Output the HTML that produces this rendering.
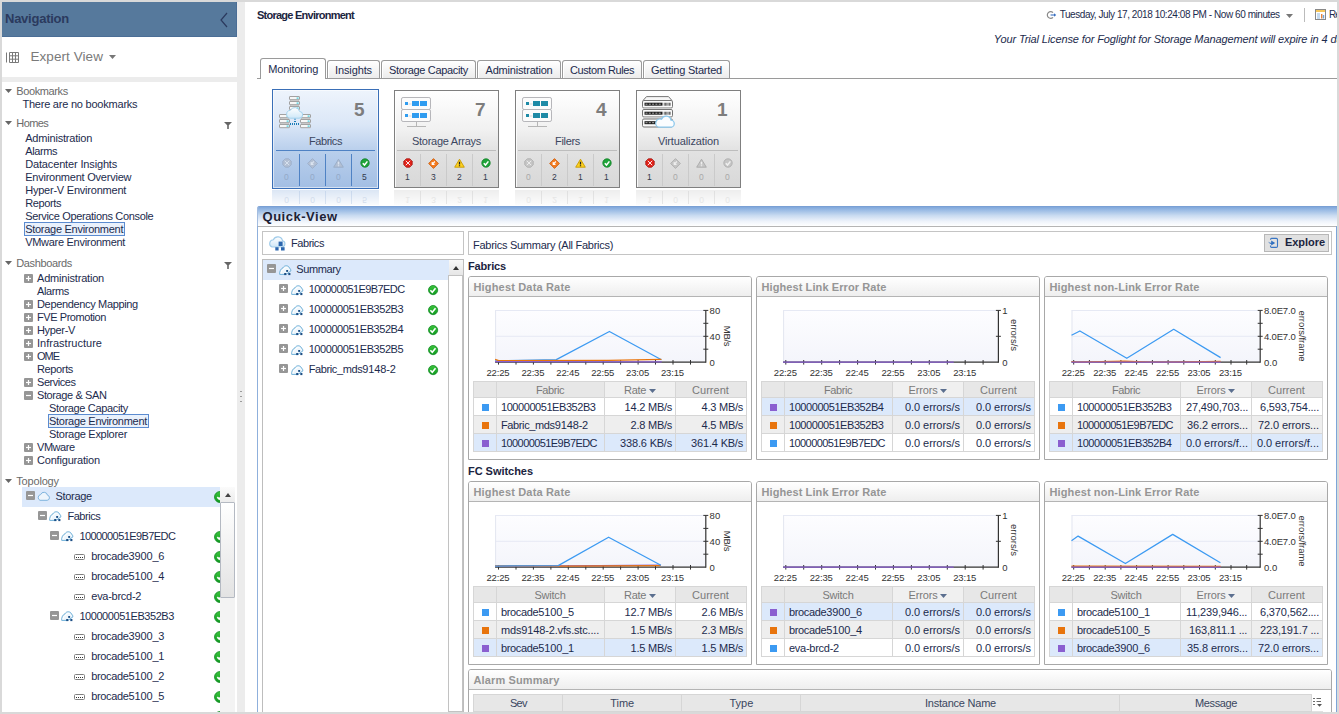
<!DOCTYPE html>
<html><head><meta charset="utf-8"><title>Storage Environment</title>
<style>
*{box-sizing:border-box;margin:0;padding:0}
html,body{width:1339px;height:714px;overflow:hidden;background:#fff}
body{font-family:"Liberation Sans",sans-serif;font-size:11px;color:#1c2b4d;position:relative}
.a{position:absolute}
.t{position:absolute;white-space:pre;line-height:14px;height:14px}
svg{position:absolute;overflow:visible}
</style></head>
<body>
<div class="a" style="left:0px;top:0px;width:1339px;height:714px;background:#d9d9d9"></div>
<div class="a" style="left:2px;top:2px;width:1335px;height:710px;background:#fff"></div>
<!-- navigation panel -->
<div class="a" style="left:2px;top:2px;width:235px;height:35px;background:#56799c;border-right:1px solid #4b6e96;border-bottom:1px solid #4b6e96"></div>
<div class="t" style="left:5.0px;top:12.0px;font-size:13px;letter-spacing:-0.25px;color:#2b3a5e;font-weight:bold;">Navigation</div>
<svg style="left:219px;top:12px;" width="10" height="16" viewBox="0 0 10 16"><path d="M8 1 L2 8 L8 15" fill="none" stroke="#2b3a5e" stroke-width="1.2"/></svg>
<div class="a" style="left:237px;top:2px;width:8px;height:710px;background:#ececec"></div>
<div class="a" style="left:2px;top:77px;width:235px;height:5px;background:#ececec"></div>
<svg style="left:6px;top:51.5px;" width="13" height="11" viewBox="0 0 13 11"><path d="M0.5 0.5v10M3.5 0.5h9v10h-9zM3.5 3.8h9M3.5 7.2h9M6.5 0.5v10M9.5 0.5v10" fill="none" stroke="#7a7a7a" stroke-width="1"/></svg>
<div class="t" style="left:30.5px;top:50.0px;font-size:13.5px;letter-spacing:0.06px;color:#7a7a7a;line-height:18px;height:18px;margin-top:-2px;">Expert View</div>
<svg style="left:109px;top:55px;" width="7" height="4" viewBox="0 0 7 4"><path d="M0 0h7L3.5 4z" fill="#777"/></svg>
<svg style="left:5px;top:89px;" width="7" height="4" viewBox="0 0 7 4"><path d="M0 0h7L3.5 4z" fill="#666"/></svg>
<div class="t" style="left:16.3px;top:84.0px;font-size:11px;letter-spacing:-0.39px;color:#6a6a6a;">Bookmarks</div>
<div class="t" style="left:22.4px;top:97.3px;font-size:11px;letter-spacing:-0.22px;">There are no bookmarks</div>
<svg style="left:5px;top:121px;" width="7" height="4" viewBox="0 0 7 4"><path d="M0 0h7L3.5 4z" fill="#666"/></svg>
<div class="t" style="left:16.3px;top:116.0px;font-size:11px;letter-spacing:-0.57px;color:#6a6a6a;">Homes</div>
<svg style="left:224px;top:122px;" width="8" height="7" viewBox="0 0 8 7"><path d="M0 0h8L4.8 3.2V7H3.2V3.2z" fill="#666"/></svg>
<div class="t" style="left:25.2px;top:131.0px;font-size:11px;letter-spacing:-0.19px;">Administration</div>
<div class="t" style="left:25.2px;top:144.0px;font-size:11px;letter-spacing:-0.37px;">Alarms</div>
<div class="t" style="left:25.2px;top:157.0px;font-size:11px;letter-spacing:-0.15px;">Datacenter Insights</div>
<div class="t" style="left:25.2px;top:170.0px;font-size:11px;letter-spacing:-0.23px;">Environment Overview</div>
<div class="t" style="left:25.2px;top:183.0px;font-size:11px;letter-spacing:-0.22px;">Hyper-V Environment</div>
<div class="t" style="left:25.2px;top:196.0px;font-size:11px;letter-spacing:-0.36px;">Reports</div>
<div class="t" style="left:25.2px;top:209.0px;font-size:11px;letter-spacing:-0.34px;">Service Operations Console</div>
<div class="a" style="left:24px;top:222px;width:101px;height:14px;border:1px solid #5b8bd0;background:#e9f1fc"></div>
<div class="t" style="left:25.2px;top:222.0px;font-size:11px;letter-spacing:-0.28px;">Storage Environment</div>
<div class="t" style="left:25.2px;top:235.0px;font-size:11px;letter-spacing:-0.29px;">VMware Environment</div>
<svg style="left:5px;top:261px;" width="7" height="4" viewBox="0 0 7 4"><path d="M0 0h7L3.5 4z" fill="#666"/></svg>
<div class="t" style="left:16.3px;top:256.0px;font-size:11px;letter-spacing:-0.38px;color:#6a6a6a;">Dashboards</div>
<svg style="left:224px;top:262px;" width="8" height="7" viewBox="0 0 8 7"><path d="M0 0h8L4.8 3.2V7H3.2V3.2z" fill="#666"/></svg>
<svg style="left:24px;top:273.5px;" width="9" height="9" viewBox="0 0 9 9"><rect x="0" y="0" width="9" height="9" rx="1" fill="#969696"/><path d="M2 4.5h5" stroke="#fff" stroke-width="1.2"/><path d="M4.5 2v5" stroke="#fff" stroke-width="1.2"/></svg>
<div class="t" style="left:37.0px;top:271.0px;font-size:11px;letter-spacing:-0.19px;">Administration</div>
<div class="t" style="left:37.0px;top:284.0px;font-size:11px;letter-spacing:-0.37px;">Alarms</div>
<svg style="left:24px;top:299.5px;" width="9" height="9" viewBox="0 0 9 9"><rect x="0" y="0" width="9" height="9" rx="1" fill="#969696"/><path d="M2 4.5h5" stroke="#fff" stroke-width="1.2"/><path d="M4.5 2v5" stroke="#fff" stroke-width="1.2"/></svg>
<div class="t" style="left:37.0px;top:297.0px;font-size:11px;letter-spacing:-0.34px;">Dependency Mapping</div>
<svg style="left:24px;top:312.5px;" width="9" height="9" viewBox="0 0 9 9"><rect x="0" y="0" width="9" height="9" rx="1" fill="#969696"/><path d="M2 4.5h5" stroke="#fff" stroke-width="1.2"/><path d="M4.5 2v5" stroke="#fff" stroke-width="1.2"/></svg>
<div class="t" style="left:37.0px;top:310.0px;font-size:11px;letter-spacing:-0.43px;">FVE Promotion</div>
<svg style="left:24px;top:325.5px;" width="9" height="9" viewBox="0 0 9 9"><rect x="0" y="0" width="9" height="9" rx="1" fill="#969696"/><path d="M2 4.5h5" stroke="#fff" stroke-width="1.2"/><path d="M4.5 2v5" stroke="#fff" stroke-width="1.2"/></svg>
<div class="t" style="left:37.0px;top:323.0px;font-size:11px;letter-spacing:-0.33px;">Hyper-V</div>
<svg style="left:24px;top:338.5px;" width="9" height="9" viewBox="0 0 9 9"><rect x="0" y="0" width="9" height="9" rx="1" fill="#969696"/><path d="M2 4.5h5" stroke="#fff" stroke-width="1.2"/><path d="M4.5 2v5" stroke="#fff" stroke-width="1.2"/></svg>
<div class="t" style="left:37.0px;top:336.0px;font-size:11px;letter-spacing:0.01px;">Infrastructure</div>
<svg style="left:24px;top:351.5px;" width="9" height="9" viewBox="0 0 9 9"><rect x="0" y="0" width="9" height="9" rx="1" fill="#969696"/><path d="M2 4.5h5" stroke="#fff" stroke-width="1.2"/><path d="M4.5 2v5" stroke="#fff" stroke-width="1.2"/></svg>
<div class="t" style="left:37.0px;top:349.0px;font-size:11px;letter-spacing:-1.02px;">OME</div>
<div class="t" style="left:37.0px;top:362.0px;font-size:11px;letter-spacing:-0.36px;">Reports</div>
<svg style="left:24px;top:377.5px;" width="9" height="9" viewBox="0 0 9 9"><rect x="0" y="0" width="9" height="9" rx="1" fill="#969696"/><path d="M2 4.5h5" stroke="#fff" stroke-width="1.2"/><path d="M4.5 2v5" stroke="#fff" stroke-width="1.2"/></svg>
<div class="t" style="left:37.0px;top:375.0px;font-size:11px;letter-spacing:-0.46px;">Services</div>
<svg style="left:24px;top:390.5px;" width="9" height="9" viewBox="0 0 9 9"><rect x="0" y="0" width="9" height="9" rx="1" fill="#969696"/><path d="M2 4.5h5" stroke="#fff" stroke-width="1.2"/></svg>
<div class="t" style="left:37.0px;top:388.0px;font-size:11px;letter-spacing:-0.39px;">Storage &amp; SAN</div>
<div class="t" style="left:49.0px;top:401.0px;font-size:11px;letter-spacing:-0.34px;">Storage Capacity</div>
<div class="a" style="left:48px;top:414px;width:101px;height:14px;border:1px solid #5b8bd0;background:#e9f1fc"></div>
<div class="t" style="left:49.0px;top:414.0px;font-size:11px;letter-spacing:-0.28px;">Storage Environment</div>
<div class="t" style="left:49.0px;top:427.0px;font-size:11px;letter-spacing:-0.28px;">Storage Explorer</div>
<svg style="left:24px;top:442.5px;" width="9" height="9" viewBox="0 0 9 9"><rect x="0" y="0" width="9" height="9" rx="1" fill="#969696"/><path d="M2 4.5h5" stroke="#fff" stroke-width="1.2"/><path d="M4.5 2v5" stroke="#fff" stroke-width="1.2"/></svg>
<div class="t" style="left:37.0px;top:440.0px;font-size:11px;letter-spacing:-0.44px;">VMware</div>
<svg style="left:24px;top:455.5px;" width="9" height="9" viewBox="0 0 9 9"><rect x="0" y="0" width="9" height="9" rx="1" fill="#969696"/><path d="M2 4.5h5" stroke="#fff" stroke-width="1.2"/><path d="M4.5 2v5" stroke="#fff" stroke-width="1.2"/></svg>
<div class="t" style="left:37.0px;top:453.0px;font-size:11px;letter-spacing:-0.19px;">Configuration</div>
<svg style="left:5px;top:479px;" width="7" height="4" viewBox="0 0 7 4"><path d="M0 0h7L3.5 4z" fill="#666"/></svg>
<div class="t" style="left:16.3px;top:474.0px;font-size:11px;letter-spacing:-0.19px;color:#6a6a6a;">Topology</div>
<div class="a" style="left:240px;top:391px;width:2px;height:1px;background:#9c9c9c"></div>
<div class="a" style="left:240px;top:396px;width:2px;height:1px;background:#9c9c9c"></div>
<div class="a" style="left:240px;top:401px;width:2px;height:1px;background:#9c9c9c"></div>
<!-- topology tree -->
<svg width="0" height="0" style="left:0;top:0"><defs><linearGradient id="okg" x1="0" y1="0" x2="0" y2="1"><stop offset="0" stop-color="#3cc43c"/><stop offset="1" stop-color="#0f9a20"/></linearGradient></defs></svg>
<div class="a" style="left:2px;top:486px;width:218px;height:226px;overflow:hidden">
<div class="a" style="left:20px;top:1px;width:198px;height:20px;background:#dce9fb"></div>
<svg style="left:24px;top:5.300000000000011px;" width="9" height="9" viewBox="0 0 9 9"><rect x="0" y="0" width="9" height="9" rx="1" fill="#969696"/><path d="M2 4.5h5" stroke="#fff" stroke-width="1.2"/></svg>
<svg style="left:35px;top:5.300000000000011px;" width="13" height="10" viewBox="0 0 13 10"><path d="M3 9.3h7.2a2.6 2.6 0 0 0 .3-5.1 3.6 3.6 0 0 0-6.9-.6A3 3 0 0 0 3 9.3z" fill="#eef5fc" stroke="#7fb4de" stroke-width="1"/></svg>
<div class="t" style="left:53.4px;top:3.3px;font-size:11px;letter-spacing:-0.29px;">Storage</div>
<svg style="left:211.5px;top:5.300000000000011px;" width="12.0" height="12.0" viewBox="0 0 12.0 12.0"><circle cx="6.0" cy="6.0" r="5.5" fill="url(#okg)" stroke="#128a25" stroke-width="0.8"/><path d="M3.3 6.1l1.9 2 3.2-4" fill="none" stroke="#fff" stroke-width="1.6"/></svg>
<svg style="left:36px;top:25.299999999999955px;" width="9" height="9" viewBox="0 0 9 9"><rect x="0" y="0" width="9" height="9" rx="1" fill="#969696"/><path d="M2 4.5h5" stroke="#fff" stroke-width="1.2"/></svg>
<svg style="left:47px;top:25.299999999999955px;" width="13" height="11" viewBox="0 0 13 11"><path d="M0.7 9.4C0.4 6.4 1.8 3.6 4 2.8 5.2 0.1 9.4 0 10.5 3c.9.6 1.4 1.7 1.4 2.9L7 9.4z" fill="#eef6fc" stroke="#6fb0d8" stroke-width="1"/><path d="M2 8.6C2 6.4 3.2 4.6 5 4 6 2.2 8.6 2 9.6 3.8" fill="none" stroke="#ffffff" stroke-width="1"/><rect x="7.2" y="5" width="1.9" height="1.9" fill="#1d4f86"/><rect x="5.2" y="8" width="2.1" height="2.1" fill="#1d4f86"/><rect x="9.3" y="8" width="2.1" height="2.1" fill="#1d4f86"/></svg>
<div class="t" style="left:65.4px;top:23.3px;font-size:11px;letter-spacing:-0.44px;">Fabrics</div>
<svg style="left:48px;top:45.299999999999955px;" width="9" height="9" viewBox="0 0 9 9"><rect x="0" y="0" width="9" height="9" rx="1" fill="#969696"/><path d="M2 4.5h5" stroke="#fff" stroke-width="1.2"/></svg>
<svg style="left:59px;top:45.299999999999955px;" width="13" height="11" viewBox="0 0 13 11"><path d="M0.7 9.4C0.4 6.4 1.8 3.6 4 2.8 5.2 0.1 9.4 0 10.5 3c.9.6 1.4 1.7 1.4 2.9L7 9.4z" fill="#eef6fc" stroke="#6fb0d8" stroke-width="1"/><path d="M2 8.6C2 6.4 3.2 4.6 5 4 6 2.2 8.6 2 9.6 3.8" fill="none" stroke="#ffffff" stroke-width="1"/><rect x="7.2" y="5" width="1.9" height="1.9" fill="#1d4f86"/><rect x="5.2" y="8" width="2.1" height="2.1" fill="#1d4f86"/><rect x="9.3" y="8" width="2.1" height="2.1" fill="#1d4f86"/></svg>
<div class="t" style="left:77.4px;top:43.3px;font-size:11px;letter-spacing:-0.58px;">100000051E9B7EDC</div>
<svg style="left:211.5px;top:45.299999999999955px;" width="12.0" height="12.0" viewBox="0 0 12.0 12.0"><circle cx="6.0" cy="6.0" r="5.5" fill="url(#okg)" stroke="#128a25" stroke-width="0.8"/><path d="M3.3 6.1l1.9 2 3.2-4" fill="none" stroke="#fff" stroke-width="1.6"/></svg>
<svg style="left:72px;top:68.29999999999995px;" width="11" height="6" viewBox="0 0 11 6"><rect x="0.5" y="0.5" width="10" height="5" rx="1" fill="#fff" stroke="#808080"/><path d="M2 3.5h1M4 3.5h1M6 3.5h1M8 3.5h1" stroke="#333" stroke-width="1"/></svg>
<div class="t" style="left:89.3px;top:63.3px;font-size:11px;letter-spacing:0.00px;"><span style="letter-spacing:-0.37px">brocade</span><span style="letter-spacing:-0.12px">3900</span><span style="letter-spacing:-0.37px">_</span><span style="letter-spacing:-0.12px">6</span></div>
<svg style="left:211.5px;top:65.29999999999995px;" width="12.0" height="12.0" viewBox="0 0 12.0 12.0"><circle cx="6.0" cy="6.0" r="5.5" fill="url(#okg)" stroke="#128a25" stroke-width="0.8"/><path d="M3.3 6.1l1.9 2 3.2-4" fill="none" stroke="#fff" stroke-width="1.6"/></svg>
<svg style="left:72px;top:88.29999999999995px;" width="11" height="6" viewBox="0 0 11 6"><rect x="0.5" y="0.5" width="10" height="5" rx="1" fill="#fff" stroke="#808080"/><path d="M2 3.5h1M4 3.5h1M6 3.5h1M8 3.5h1" stroke="#333" stroke-width="1"/></svg>
<div class="t" style="left:89.3px;top:83.3px;font-size:11px;letter-spacing:0.00px;"><span style="letter-spacing:-0.37px">brocade</span><span style="letter-spacing:-0.12px">5100</span><span style="letter-spacing:-0.37px">_</span><span style="letter-spacing:-0.12px">4</span></div>
<svg style="left:211.5px;top:85.29999999999995px;" width="12.0" height="12.0" viewBox="0 0 12.0 12.0"><circle cx="6.0" cy="6.0" r="5.5" fill="url(#okg)" stroke="#128a25" stroke-width="0.8"/><path d="M3.3 6.1l1.9 2 3.2-4" fill="none" stroke="#fff" stroke-width="1.6"/></svg>
<svg style="left:72px;top:108.29999999999995px;" width="11" height="6" viewBox="0 0 11 6"><rect x="0.5" y="0.5" width="10" height="5" rx="1" fill="#fff" stroke="#808080"/><path d="M2 3.5h1M4 3.5h1M6 3.5h1M8 3.5h1" stroke="#333" stroke-width="1"/></svg>
<div class="t" style="left:89.3px;top:103.3px;font-size:11px;letter-spacing:0.00px;"><span style="letter-spacing:-0.27px">eva-brcd-</span><span style="letter-spacing:-0.12px">2</span></div>
<svg style="left:211.5px;top:105.29999999999995px;" width="12.0" height="12.0" viewBox="0 0 12.0 12.0"><circle cx="6.0" cy="6.0" r="5.5" fill="url(#okg)" stroke="#128a25" stroke-width="0.8"/><path d="M3.3 6.1l1.9 2 3.2-4" fill="none" stroke="#fff" stroke-width="1.6"/></svg>
<svg style="left:48px;top:125.29999999999995px;" width="9" height="9" viewBox="0 0 9 9"><rect x="0" y="0" width="9" height="9" rx="1" fill="#969696"/><path d="M2 4.5h5" stroke="#fff" stroke-width="1.2"/></svg>
<svg style="left:59px;top:125.29999999999995px;" width="13" height="11" viewBox="0 0 13 11"><path d="M0.7 9.4C0.4 6.4 1.8 3.6 4 2.8 5.2 0.1 9.4 0 10.5 3c.9.6 1.4 1.7 1.4 2.9L7 9.4z" fill="#eef6fc" stroke="#6fb0d8" stroke-width="1"/><path d="M2 8.6C2 6.4 3.2 4.6 5 4 6 2.2 8.6 2 9.6 3.8" fill="none" stroke="#ffffff" stroke-width="1"/><rect x="7.2" y="5" width="1.9" height="1.9" fill="#1d4f86"/><rect x="5.2" y="8" width="2.1" height="2.1" fill="#1d4f86"/><rect x="9.3" y="8" width="2.1" height="2.1" fill="#1d4f86"/></svg>
<div class="t" style="left:77.4px;top:123.3px;font-size:11px;letter-spacing:-0.44px;">100000051EB352B3</div>
<svg style="left:211.5px;top:125.29999999999995px;" width="12.0" height="12.0" viewBox="0 0 12.0 12.0"><circle cx="6.0" cy="6.0" r="5.5" fill="url(#okg)" stroke="#128a25" stroke-width="0.8"/><path d="M3.3 6.1l1.9 2 3.2-4" fill="none" stroke="#fff" stroke-width="1.6"/></svg>
<svg style="left:72px;top:148.29999999999995px;" width="11" height="6" viewBox="0 0 11 6"><rect x="0.5" y="0.5" width="10" height="5" rx="1" fill="#fff" stroke="#808080"/><path d="M2 3.5h1M4 3.5h1M6 3.5h1M8 3.5h1" stroke="#333" stroke-width="1"/></svg>
<div class="t" style="left:89.3px;top:143.3px;font-size:11px;letter-spacing:0.00px;"><span style="letter-spacing:-0.37px">brocade</span><span style="letter-spacing:-0.12px">3900</span><span style="letter-spacing:-0.37px">_</span><span style="letter-spacing:-0.12px">3</span></div>
<svg style="left:211.5px;top:145.29999999999995px;" width="12.0" height="12.0" viewBox="0 0 12.0 12.0"><circle cx="6.0" cy="6.0" r="5.5" fill="url(#okg)" stroke="#128a25" stroke-width="0.8"/><path d="M3.3 6.1l1.9 2 3.2-4" fill="none" stroke="#fff" stroke-width="1.6"/></svg>
<svg style="left:72px;top:168.29999999999995px;" width="11" height="6" viewBox="0 0 11 6"><rect x="0.5" y="0.5" width="10" height="5" rx="1" fill="#fff" stroke="#808080"/><path d="M2 3.5h1M4 3.5h1M6 3.5h1M8 3.5h1" stroke="#333" stroke-width="1"/></svg>
<div class="t" style="left:89.3px;top:163.3px;font-size:11px;letter-spacing:0.00px;"><span style="letter-spacing:-0.37px">brocade</span><span style="letter-spacing:-0.12px">5100</span><span style="letter-spacing:-0.37px">_</span><span style="letter-spacing:-0.12px">1</span></div>
<svg style="left:211.5px;top:165.29999999999995px;" width="12.0" height="12.0" viewBox="0 0 12.0 12.0"><circle cx="6.0" cy="6.0" r="5.5" fill="url(#okg)" stroke="#128a25" stroke-width="0.8"/><path d="M3.3 6.1l1.9 2 3.2-4" fill="none" stroke="#fff" stroke-width="1.6"/></svg>
<svg style="left:72px;top:188.29999999999995px;" width="11" height="6" viewBox="0 0 11 6"><rect x="0.5" y="0.5" width="10" height="5" rx="1" fill="#fff" stroke="#808080"/><path d="M2 3.5h1M4 3.5h1M6 3.5h1M8 3.5h1" stroke="#333" stroke-width="1"/></svg>
<div class="t" style="left:89.3px;top:183.3px;font-size:11px;letter-spacing:0.00px;"><span style="letter-spacing:-0.37px">brocade</span><span style="letter-spacing:-0.12px">5100</span><span style="letter-spacing:-0.37px">_</span><span style="letter-spacing:-0.12px">2</span></div>
<svg style="left:211.5px;top:185.29999999999995px;" width="12.0" height="12.0" viewBox="0 0 12.0 12.0"><circle cx="6.0" cy="6.0" r="5.5" fill="url(#okg)" stroke="#128a25" stroke-width="0.8"/><path d="M3.3 6.1l1.9 2 3.2-4" fill="none" stroke="#fff" stroke-width="1.6"/></svg>
<svg style="left:72px;top:208.29999999999995px;" width="11" height="6" viewBox="0 0 11 6"><rect x="0.5" y="0.5" width="10" height="5" rx="1" fill="#fff" stroke="#808080"/><path d="M2 3.5h1M4 3.5h1M6 3.5h1M8 3.5h1" stroke="#333" stroke-width="1"/></svg>
<div class="t" style="left:89.3px;top:203.3px;font-size:11px;letter-spacing:0.00px;"><span style="letter-spacing:-0.37px">brocade</span><span style="letter-spacing:-0.12px">5100</span><span style="letter-spacing:-0.37px">_</span><span style="letter-spacing:-0.12px">5</span></div>
<svg style="left:211.5px;top:205.29999999999995px;" width="12.0" height="12.0" viewBox="0 0 12.0 12.0"><circle cx="6.0" cy="6.0" r="5.5" fill="url(#okg)" stroke="#128a25" stroke-width="0.8"/><path d="M3.3 6.1l1.9 2 3.2-4" fill="none" stroke="#fff" stroke-width="1.6"/></svg>
<svg style="left:72px;top:228.29999999999995px;" width="11" height="6" viewBox="0 0 11 6"><rect x="0.5" y="0.5" width="10" height="5" rx="1" fill="#fff" stroke="#808080"/><path d="M2 3.5h1M4 3.5h1M6 3.5h1M8 3.5h1" stroke="#333" stroke-width="1"/></svg>
<div class="t" style="left:89.3px;top:223.3px;font-size:11px;letter-spacing:0.00px;"><span style="letter-spacing:-0.27px">eva-brcd-</span><span style="letter-spacing:-0.12px">1</span></div>
<svg style="left:211.5px;top:225.29999999999995px;" width="12.0" height="12.0" viewBox="0 0 12.0 12.0"><circle cx="6.0" cy="6.0" r="5.5" fill="url(#okg)" stroke="#128a25" stroke-width="0.8"/><path d="M3.3 6.1l1.9 2 3.2-4" fill="none" stroke="#fff" stroke-width="1.6"/></svg>
</div>
<div class="a" style="left:220px;top:487px;width:15px;height:225px;background:#f3f3f3"></div>
<div class="a" style="left:220px;top:487px;width:15px;height:15px;background:linear-gradient(#fbfbfb,#ececec)"></div>
<svg style="left:224.5px;top:493px;" width="6" height="4" viewBox="0 0 6 4"><path d="M0 4h6L3 0z" fill="#444"/></svg>
<div class="a" style="left:220px;top:502px;width:15px;height:96px;background:linear-gradient(#ffffff,#e3e3e3);border:1px solid #b4b9c2;border-radius:1px"></div>
<!-- page header -->
<div class="t" style="left:257.0px;top:7.5px;font-size:11px;letter-spacing:-0.75px;color:#1b2440;font-weight:bold;">Storage Environment</div>
<svg style="left:1047px;top:10.5px;" width="10" height="8" viewBox="0 0 10 8"><path d="M6 1.7A3.3 3.3 0 1 0 6 6.3" fill="none" stroke="#8a8a8a" stroke-width="1.2"/><path d="M3.6 4h4.6" stroke="#3a6fc0" stroke-width="1.1"/><path d="M7 2.2L9.2 4 7 5.8z" fill="#3a6fc0"/></svg>
<div class="t" style="left:1059.7px;top:7.8px;font-size:10px;letter-spacing:-0.44px;">Tuesday, July 17, 2018 10:24:08 PM - Now 60 minutes</div>
<svg style="left:1286px;top:13.5px;" width="7" height="4" viewBox="0 0 7 4"><path d="M0 0h7L3.5 4z" fill="#777"/></svg>
<div class="a" style="left:1304px;top:8px;width:1px;height:14px;background:#bbb"></div>
<svg style="left:1315px;top:9px;" width="11" height="11" viewBox="0 0 11 11"><rect x="0.5" y="0.5" width="10" height="10" fill="#fff" stroke="#888"/><rect x="1" y="1" width="9" height="2" fill="#f6c65a"/><path d="M2 5h3M2 7h3M2 9h3" stroke="#6fa3d8" stroke-width="0.8"/><rect x="6" y="5" width="1.4" height="4.5" fill="#e8833a"/><rect x="7.8" y="6" width="1.4" height="3.5" fill="#6fa3d8"/></svg>
<div class="t" style="left:1329.0px;top:7.8px;font-size:10px;letter-spacing:-0.90px;">Re</div>
<div class="t" style="left:993.8px;top:31.8px;font-size:11px;letter-spacing:0.00px;font-style:italic;"><span style="letter-spacing:-0.12px">Your Trial License for Foglight for Storage Management will expire in </span><span style="letter-spacing:-0.12px">4</span><span style="letter-spacing:-0.12px"> days</span></div>
<!-- tabs -->
<div class="a" style="left:327px;top:60px;width:53px;height:18px;border:1px solid #9a9a9a;border-bottom:none;border-radius:3px 3px 0 0;background:linear-gradient(#fff,#ececec);box-shadow:inset 1px 1px 0 #fff"></div>
<div class="t" style="left:335.0px;top:62.8px;font-size:11px;letter-spacing:-0.12px;">Insights</div>
<div class="a" style="left:381px;top:60px;width:95px;height:18px;border:1px solid #9a9a9a;border-bottom:none;border-radius:3px 3px 0 0;background:linear-gradient(#fff,#ececec);box-shadow:inset 1px 1px 0 #fff"></div>
<div class="t" style="left:389.0px;top:62.8px;font-size:11px;letter-spacing:-0.34px;">Storage Capacity</div>
<div class="a" style="left:477px;top:60px;width:84px;height:18px;border:1px solid #9a9a9a;border-bottom:none;border-radius:3px 3px 0 0;background:linear-gradient(#fff,#ececec);box-shadow:inset 1px 1px 0 #fff"></div>
<div class="t" style="left:485.5px;top:62.8px;font-size:11px;letter-spacing:-0.19px;">Administration</div>
<div class="a" style="left:562px;top:60px;width:80px;height:18px;border:1px solid #9a9a9a;border-bottom:none;border-radius:3px 3px 0 0;background:linear-gradient(#fff,#ececec);box-shadow:inset 1px 1px 0 #fff"></div>
<div class="t" style="left:570.0px;top:62.8px;font-size:11px;letter-spacing:-0.42px;">Custom Rules</div>
<div class="a" style="left:643px;top:60px;width:87px;height:18px;border:1px solid #9a9a9a;border-bottom:none;border-radius:3px 3px 0 0;background:linear-gradient(#fff,#ececec);box-shadow:inset 1px 1px 0 #fff"></div>
<div class="t" style="left:651.0px;top:62.8px;font-size:11px;letter-spacing:-0.20px;">Getting Started</div>
<div class="a" style="left:257px;top:78px;width:1080px;height:1px;background:#9a9a9a"></div>
<div class="a" style="left:260px;top:58px;width:66px;height:21px;border:1px solid #9a9a9a;border-bottom:none;border-radius:3px 3px 0 0;background:#fff"></div>
<div class="t" style="left:268.2px;top:61.8px;font-size:11px;letter-spacing:-0.14px;">Monitoring</div>
<!-- tiles -->
<div class="a" style="left:272px;top:89px;width:107px;height:100px;border:1px solid #3a6fb7;background:linear-gradient(#eef4fc 0%,#dbe7f7 35%,#b9cfec 62%,#a3bfe4 100%);box-shadow:inset 0 0 0 1px rgba(255,255,255,.55)"></div>
<div class="t" style="left:309.0px;top:134.0px;font-size:11px;letter-spacing:-0.44px;color:#3b4660;">Fabrics</div>
<div class="t" style="left:354.0px;top:103.0px;font-size:19px;letter-spacing:0.00px;color:#7d7d7d;font-weight:bold;line-height:22px;height:22px;margin-top:-4px;">5</div>
<div class="a" style="left:276px;top:150px;width:99px;height:1px;background:#4f82c4"></div>
<div class="a" style="left:299px;top:154px;width:1px;height:32px;background:#4f82c4"></div>
<div class="a" style="left:325px;top:154px;width:1px;height:32px;background:#4f82c4"></div>
<div class="a" style="left:351px;top:154px;width:1px;height:32px;background:#4f82c4"></div>
<svg style="left:281.5px;top:158.4px;" width="10" height="10" viewBox="0 0 10 10"><path d="M3.3 0.8h3.4L9.2 3.3v3.4L6.7 9.2H3.3L0.8 6.7V3.3z" fill="#b3c0d4" stroke="#98abc6" stroke-width="0.8"/><path d="M2.8 2.8l4.4 4.4M7.2 2.8l-4.4 4.4" stroke="#dbe4f0" stroke-width="0.9"/></svg>
<div class="t" style="left:284.1px;top:170.1px;font-size:8.5px;letter-spacing:0.00px;color:#94a9c8;">0</div>
<svg style="left:307.0px;top:157.9px;" width="11" height="11" viewBox="0 0 11 11"><path d="M5.5 0.6L10.4 5.5 5.5 10.4 0.6 5.5z" fill="#b3c0d4" stroke="#98abc6" stroke-width="0.8"/><path d="M6.9 3.5L4.3 6.1M4.2 4.1v2.3h2.3" fill="none" stroke="#dbe4f0" stroke-width="1.1"/></svg>
<div class="t" style="left:310.1px;top:170.1px;font-size:8.5px;letter-spacing:0.00px;color:#94a9c8;">0</div>
<svg style="left:333.0px;top:158.4px;" width="11" height="10" viewBox="0 0 11 10"><path d="M5.5 1.2L10.3 9.2H0.7z" fill="#b3c0d4" stroke="#98abc6" stroke-width="0.9" stroke-linejoin="round"/><path d="M5.5 3.8v2.6M5.5 7.2v1.1" stroke="#dbe4f0" stroke-width="1.3"/></svg>
<div class="t" style="left:336.1px;top:170.1px;font-size:8.5px;letter-spacing:0.00px;color:#94a9c8;">0</div>
<svg style="left:359.5px;top:158.4px;" width="10" height="10" viewBox="0 0 10 10"><circle cx="5" cy="5" r="4.2" fill="#1fa53a" stroke="#0c7d22" stroke-width="0.8"/><path d="M2.8 5.2l1.7 1.8 2.9-3.6" fill="none" stroke="#fff" stroke-width="1.5"/></svg>
<div class="t" style="left:362.1px;top:170.1px;font-size:8.5px;letter-spacing:0.00px;color:#333a4d;">5</div>
<div class="a" style="left:272px;top:190px;width:107px;height:15px;background:linear-gradient(rgba(255,255,255,.58),rgba(255,255,255,.93)),#a9c3e6"></div>
<div class="a" style="left:299px;top:191px;width:1px;height:13px;background:rgba(160,185,220,.35)"></div>
<div class="a" style="left:325px;top:191px;width:1px;height:13px;background:rgba(160,185,220,.35)"></div>
<div class="a" style="left:351px;top:191px;width:1px;height:13px;background:rgba(160,185,220,.35)"></div>
<div class="t" style="left:283.5px;top:193px;font-size:8.5px;color:#d3ddec;transform:scaleY(-1);width:6px;text-align:center">0</div>
<div class="t" style="left:309.5px;top:193px;font-size:8.5px;color:#d3ddec;transform:scaleY(-1);width:6px;text-align:center">0</div>
<div class="t" style="left:335.5px;top:193px;font-size:8.5px;color:#d3ddec;transform:scaleY(-1);width:6px;text-align:center">0</div>
<div class="t" style="left:361.5px;top:193px;font-size:8.5px;color:#d3ddec;transform:scaleY(-1);width:6px;text-align:center">5</div>
<div class="a" style="left:394px;top:90px;width:105px;height:98px;border:1px solid #7f7f7f;background:linear-gradient(#ffffff 0%,#f1f1f1 40%,#e2e2e2 62%,#d8d8d8 100%);box-shadow:inset 1px 1px 0 rgba(255,255,255,.8)"></div>
<div class="t" style="left:412.0px;top:134.0px;font-size:11px;letter-spacing:-0.27px;color:#3b4660;">Storage Arrays</div>
<div class="t" style="left:475.0px;top:103.0px;font-size:19px;letter-spacing:0.00px;color:#7d7d7d;font-weight:bold;line-height:22px;height:22px;margin-top:-4px;">7</div>
<div class="a" style="left:397px;top:150px;width:99px;height:1px;background:#bdbdbd"></div>
<div class="a" style="left:420px;top:154px;width:1px;height:32px;background:#cacaca"></div>
<div class="a" style="left:446px;top:154px;width:1px;height:32px;background:#cacaca"></div>
<div class="a" style="left:472px;top:154px;width:1px;height:32px;background:#cacaca"></div>
<svg style="left:402.5px;top:158.4px;" width="10" height="10" viewBox="0 0 10 10"><path d="M3.3 0.8h3.4L9.2 3.3v3.4L6.7 9.2H3.3L0.8 6.7V3.3z" fill="#e2231a" stroke="#a01510" stroke-width="0.8"/><path d="M2.8 2.8l4.4 4.4M7.2 2.8l-4.4 4.4" stroke="#fff" stroke-width="0.9"/></svg>
<div class="t" style="left:405.1px;top:170.1px;font-size:8.5px;letter-spacing:0.00px;color:#333a4d;">1</div>
<svg style="left:428.0px;top:157.9px;" width="11" height="11" viewBox="0 0 11 11"><path d="M5.5 0.6L10.4 5.5 5.5 10.4 0.6 5.5z" fill="#f47b20" stroke="#c85a0a" stroke-width="0.8"/><path d="M6.9 3.5L4.3 6.1M4.2 4.1v2.3h2.3" fill="none" stroke="#fff" stroke-width="1.1"/></svg>
<div class="t" style="left:431.1px;top:170.1px;font-size:8.5px;letter-spacing:0.00px;color:#333a4d;">3</div>
<svg style="left:454.0px;top:158.4px;" width="11" height="10" viewBox="0 0 11 10"><path d="M5.5 1.2L10.3 9.2H0.7z" fill="#ffd21f" stroke="#c79a00" stroke-width="0.9" stroke-linejoin="round"/><path d="M5.5 3.8v2.6M5.5 7.2v1.1" stroke="#222" stroke-width="1.3"/></svg>
<div class="t" style="left:457.1px;top:170.1px;font-size:8.5px;letter-spacing:0.00px;color:#333a4d;">2</div>
<svg style="left:480.5px;top:158.4px;" width="10" height="10" viewBox="0 0 10 10"><circle cx="5" cy="5" r="4.2" fill="#1fa53a" stroke="#0c7d22" stroke-width="0.8"/><path d="M2.8 5.2l1.7 1.8 2.9-3.6" fill="none" stroke="#fff" stroke-width="1.5"/></svg>
<div class="t" style="left:483.1px;top:170.1px;font-size:8.5px;letter-spacing:0.00px;color:#333a4d;">1</div>
<div class="a" style="left:394px;top:190px;width:105px;height:15px;background:linear-gradient(rgba(255,255,255,.58),rgba(255,255,255,.93)),#d6d6d6"></div>
<div class="a" style="left:420px;top:191px;width:1px;height:13px;background:rgba(200,200,200,.4)"></div>
<div class="a" style="left:446px;top:191px;width:1px;height:13px;background:rgba(200,200,200,.4)"></div>
<div class="a" style="left:472px;top:191px;width:1px;height:13px;background:rgba(200,200,200,.4)"></div>
<div class="t" style="left:404.5px;top:193px;font-size:8.5px;color:#e6e6e6;transform:scaleY(-1);width:6px;text-align:center">1</div>
<div class="t" style="left:430.5px;top:193px;font-size:8.5px;color:#e6e6e6;transform:scaleY(-1);width:6px;text-align:center">3</div>
<div class="t" style="left:456.5px;top:193px;font-size:8.5px;color:#e6e6e6;transform:scaleY(-1);width:6px;text-align:center">2</div>
<div class="t" style="left:482.5px;top:193px;font-size:8.5px;color:#e6e6e6;transform:scaleY(-1);width:6px;text-align:center">1</div>
<div class="a" style="left:515px;top:90px;width:105px;height:98px;border:1px solid #7f7f7f;background:linear-gradient(#ffffff 0%,#f1f1f1 40%,#e2e2e2 62%,#d8d8d8 100%);box-shadow:inset 1px 1px 0 rgba(255,255,255,.8)"></div>
<div class="t" style="left:555.0px;top:134.0px;font-size:11px;letter-spacing:-0.32px;color:#3b4660;">Filers</div>
<div class="t" style="left:596.0px;top:103.0px;font-size:19px;letter-spacing:0.00px;color:#7d7d7d;font-weight:bold;line-height:22px;height:22px;margin-top:-4px;">4</div>
<div class="a" style="left:518px;top:150px;width:99px;height:1px;background:#bdbdbd"></div>
<div class="a" style="left:541px;top:154px;width:1px;height:32px;background:#cacaca"></div>
<div class="a" style="left:567px;top:154px;width:1px;height:32px;background:#cacaca"></div>
<div class="a" style="left:593px;top:154px;width:1px;height:32px;background:#cacaca"></div>
<svg style="left:523.5px;top:158.4px;" width="10" height="10" viewBox="0 0 10 10"><path d="M3.3 0.8h3.4L9.2 3.3v3.4L6.7 9.2H3.3L0.8 6.7V3.3z" fill="#c6c6c6" stroke="#a9a9a9" stroke-width="0.8"/><path d="M2.8 2.8l4.4 4.4M7.2 2.8l-4.4 4.4" stroke="#efefef" stroke-width="0.9"/></svg>
<div class="t" style="left:526.1px;top:170.1px;font-size:8.5px;letter-spacing:0.00px;color:#a9a9a9;">0</div>
<svg style="left:549.0px;top:157.9px;" width="11" height="11" viewBox="0 0 11 11"><path d="M5.5 0.6L10.4 5.5 5.5 10.4 0.6 5.5z" fill="#f47b20" stroke="#c85a0a" stroke-width="0.8"/><path d="M6.9 3.5L4.3 6.1M4.2 4.1v2.3h2.3" fill="none" stroke="#fff" stroke-width="1.1"/></svg>
<div class="t" style="left:552.1px;top:170.1px;font-size:8.5px;letter-spacing:0.00px;color:#333a4d;">2</div>
<svg style="left:575.0px;top:158.4px;" width="11" height="10" viewBox="0 0 11 10"><path d="M5.5 1.2L10.3 9.2H0.7z" fill="#ffd21f" stroke="#c79a00" stroke-width="0.9" stroke-linejoin="round"/><path d="M5.5 3.8v2.6M5.5 7.2v1.1" stroke="#222" stroke-width="1.3"/></svg>
<div class="t" style="left:578.1px;top:170.1px;font-size:8.5px;letter-spacing:0.00px;color:#333a4d;">1</div>
<svg style="left:601.5px;top:158.4px;" width="10" height="10" viewBox="0 0 10 10"><circle cx="5" cy="5" r="4.2" fill="#1fa53a" stroke="#0c7d22" stroke-width="0.8"/><path d="M2.8 5.2l1.7 1.8 2.9-3.6" fill="none" stroke="#fff" stroke-width="1.5"/></svg>
<div class="t" style="left:604.1px;top:170.1px;font-size:8.5px;letter-spacing:0.00px;color:#333a4d;">1</div>
<div class="a" style="left:515px;top:190px;width:105px;height:15px;background:linear-gradient(rgba(255,255,255,.58),rgba(255,255,255,.93)),#d6d6d6"></div>
<div class="a" style="left:541px;top:191px;width:1px;height:13px;background:rgba(200,200,200,.4)"></div>
<div class="a" style="left:567px;top:191px;width:1px;height:13px;background:rgba(200,200,200,.4)"></div>
<div class="a" style="left:593px;top:191px;width:1px;height:13px;background:rgba(200,200,200,.4)"></div>
<div class="t" style="left:525.5px;top:193px;font-size:8.5px;color:#e6e6e6;transform:scaleY(-1);width:6px;text-align:center">0</div>
<div class="t" style="left:551.5px;top:193px;font-size:8.5px;color:#e6e6e6;transform:scaleY(-1);width:6px;text-align:center">2</div>
<div class="t" style="left:577.5px;top:193px;font-size:8.5px;color:#e6e6e6;transform:scaleY(-1);width:6px;text-align:center">1</div>
<div class="t" style="left:603.5px;top:193px;font-size:8.5px;color:#e6e6e6;transform:scaleY(-1);width:6px;text-align:center">1</div>
<div class="a" style="left:636px;top:90px;width:105px;height:98px;border:1px solid #7f7f7f;background:linear-gradient(#ffffff 0%,#f1f1f1 40%,#e2e2e2 62%,#d8d8d8 100%);box-shadow:inset 1px 1px 0 rgba(255,255,255,.8)"></div>
<div class="t" style="left:658.0px;top:134.0px;font-size:11px;letter-spacing:-0.13px;color:#3b4660;">Virtualization</div>
<div class="t" style="left:717.0px;top:103.0px;font-size:19px;letter-spacing:0.00px;color:#7d7d7d;font-weight:bold;line-height:22px;height:22px;margin-top:-4px;">1</div>
<div class="a" style="left:639px;top:150px;width:99px;height:1px;background:#bdbdbd"></div>
<div class="a" style="left:662px;top:154px;width:1px;height:32px;background:#cacaca"></div>
<div class="a" style="left:688px;top:154px;width:1px;height:32px;background:#cacaca"></div>
<div class="a" style="left:714px;top:154px;width:1px;height:32px;background:#cacaca"></div>
<svg style="left:644.5px;top:158.4px;" width="10" height="10" viewBox="0 0 10 10"><path d="M3.3 0.8h3.4L9.2 3.3v3.4L6.7 9.2H3.3L0.8 6.7V3.3z" fill="#e2231a" stroke="#a01510" stroke-width="0.8"/><path d="M2.8 2.8l4.4 4.4M7.2 2.8l-4.4 4.4" stroke="#fff" stroke-width="0.9"/></svg>
<div class="t" style="left:647.1px;top:170.1px;font-size:8.5px;letter-spacing:0.00px;color:#333a4d;">1</div>
<svg style="left:670.0px;top:157.9px;" width="11" height="11" viewBox="0 0 11 11"><path d="M5.5 0.6L10.4 5.5 5.5 10.4 0.6 5.5z" fill="#c6c6c6" stroke="#a9a9a9" stroke-width="0.8"/><path d="M6.9 3.5L4.3 6.1M4.2 4.1v2.3h2.3" fill="none" stroke="#efefef" stroke-width="1.1"/></svg>
<div class="t" style="left:673.1px;top:170.1px;font-size:8.5px;letter-spacing:0.00px;color:#a9a9a9;">0</div>
<svg style="left:696.0px;top:158.4px;" width="11" height="10" viewBox="0 0 11 10"><path d="M5.5 1.2L10.3 9.2H0.7z" fill="#c6c6c6" stroke="#a9a9a9" stroke-width="0.9" stroke-linejoin="round"/><path d="M5.5 3.8v2.6M5.5 7.2v1.1" stroke="#efefef" stroke-width="1.3"/></svg>
<div class="t" style="left:699.1px;top:170.1px;font-size:8.5px;letter-spacing:0.00px;color:#a9a9a9;">0</div>
<svg style="left:722.5px;top:158.4px;" width="10" height="10" viewBox="0 0 10 10"><circle cx="5" cy="5" r="4.2" fill="#c6c6c6" stroke="#a9a9a9" stroke-width="0.8"/><path d="M2.8 5.2l1.7 1.8 2.9-3.6" fill="none" stroke="#efefef" stroke-width="1.5"/></svg>
<div class="t" style="left:725.1px;top:170.1px;font-size:8.5px;letter-spacing:0.00px;color:#a9a9a9;">0</div>
<div class="a" style="left:636px;top:190px;width:105px;height:15px;background:linear-gradient(rgba(255,255,255,.58),rgba(255,255,255,.93)),#d6d6d6"></div>
<div class="a" style="left:662px;top:191px;width:1px;height:13px;background:rgba(200,200,200,.4)"></div>
<div class="a" style="left:688px;top:191px;width:1px;height:13px;background:rgba(200,200,200,.4)"></div>
<div class="a" style="left:714px;top:191px;width:1px;height:13px;background:rgba(200,200,200,.4)"></div>
<div class="t" style="left:646.5px;top:193px;font-size:8.5px;color:#e6e6e6;transform:scaleY(-1);width:6px;text-align:center">1</div>
<div class="t" style="left:672.5px;top:193px;font-size:8.5px;color:#e6e6e6;transform:scaleY(-1);width:6px;text-align:center">0</div>
<div class="t" style="left:698.5px;top:193px;font-size:8.5px;color:#e6e6e6;transform:scaleY(-1);width:6px;text-align:center">0</div>
<div class="t" style="left:724.5px;top:193px;font-size:8.5px;color:#e6e6e6;transform:scaleY(-1);width:6px;text-align:center">0</div>
<svg style="left:401px;top:97px;" width="30" height="31" viewBox="0 0 30 31"><rect x="0.5" y="0.5" width="29" height="12" rx="1.6" fill="#fbfbfb" stroke="#b6b6ba"/><rect x="4" y="5.0" width="3" height="3" fill="#2f9cf0"/><rect x="7.5" y="6.0" width="3" height="2" fill="#e9e9e9"/><rect x="11" y="4.0" width="7" height="5" fill="#2f9cf0"/><rect x="19" y="4.0" width="7" height="5" fill="#2f9cf0"/><rect x="0.5" y="12.5" width="29" height="12" rx="1.6" fill="#fbfbfb" stroke="#b6b6ba"/><rect x="4" y="17.0" width="3" height="3" fill="#2f9cf0"/><rect x="7.5" y="18.0" width="3" height="2" fill="#e9e9e9"/><rect x="11" y="16.0" width="7" height="5" fill="#2f9cf0"/><rect x="19" y="16.0" width="7" height="5" fill="#2f9cf0"/><path d="M15.5 25v4.5M6 29.5h19" stroke="#b6b6b6" stroke-width="1" fill="none"/></svg>
<svg style="left:522px;top:97px;" width="30" height="31" viewBox="0 0 30 31"><rect x="0.5" y="0.5" width="29" height="12" rx="1.6" fill="#fbfbfb" stroke="#b6b6ba"/><rect x="4" y="5.0" width="3" height="3" fill="#1e8aa6"/><rect x="7.5" y="6.0" width="3" height="2" fill="#e9e9e9"/><rect x="11" y="4.0" width="7" height="5" fill="#1e8aa6"/><rect x="19" y="4.0" width="7" height="5" fill="#1e8aa6"/><rect x="0.5" y="12.5" width="29" height="12" rx="1.6" fill="#fbfbfb" stroke="#b6b6ba"/><rect x="4" y="17.0" width="3" height="3" fill="#1e8aa6"/><rect x="7.5" y="18.0" width="3" height="2" fill="#e9e9e9"/><rect x="11" y="16.0" width="7" height="5" fill="#1e8aa6"/><rect x="19" y="16.0" width="7" height="5" fill="#1e8aa6"/><path d="M15.5 25v4.5M6 29.5h19" stroke="#b6b6b6" stroke-width="1" fill="none"/></svg>
<svg style="left:279px;top:96px;" width="33" height="33" viewBox="0 0 33 33"><rect x="11.5" y="4" width="8" height="1.5" fill="#dcdcdc" stroke="#b0b0b0" stroke-width="0.5"/><rect x="10.5" y="0.5" width="10" height="3.2" rx="0.4" fill="#f7f7f7" stroke="#a2a2a2" stroke-width="1"/><rect x="17.6" y="1.6" width="2" height="1" fill="#1fc4d8"/><rect x="11.5" y="9" width="8" height="1.5" fill="#dcdcdc" stroke="#b0b0b0" stroke-width="0.5"/><rect x="10.5" y="5.5" width="10" height="3.2" rx="0.4" fill="#f7f7f7" stroke="#a2a2a2" stroke-width="1"/><rect x="17.6" y="6.6" width="2" height="1" fill="#1fc4d8"/><rect x="10.5" y="10.5" width="10" height="3.2" rx="0.4" fill="#f7f7f7" stroke="#a2a2a2" stroke-width="1"/><rect x="17.6" y="11.6" width="2" height="1" fill="#1fc4d8"/><rect x="1.5" y="22" width="8" height="1.5" fill="#dcdcdc" stroke="#b0b0b0" stroke-width="0.5"/><rect x="0.5" y="18.5" width="10" height="3.2" rx="0.4" fill="#f7f7f7" stroke="#a2a2a2" stroke-width="1"/><rect x="7.6" y="19.6" width="2" height="1" fill="#1fc4d8"/><rect x="1.5" y="27" width="8" height="1.5" fill="#dcdcdc" stroke="#b0b0b0" stroke-width="0.5"/><rect x="0.5" y="23.5" width="10" height="3.2" rx="0.4" fill="#f7f7f7" stroke="#a2a2a2" stroke-width="1"/><rect x="7.6" y="24.6" width="2" height="1" fill="#1fc4d8"/><rect x="0.5" y="28.5" width="10" height="3.2" rx="0.4" fill="#f7f7f7" stroke="#a2a2a2" stroke-width="1"/><rect x="7.6" y="29.6" width="2" height="1" fill="#1fc4d8"/><rect x="22.5" y="22" width="8" height="1.5" fill="#dcdcdc" stroke="#b0b0b0" stroke-width="0.5"/><rect x="21.5" y="18.5" width="10" height="3.2" rx="0.4" fill="#f7f7f7" stroke="#a2a2a2" stroke-width="1"/><rect x="28.6" y="19.6" width="2" height="1" fill="#1fc4d8"/><rect x="22.5" y="27" width="8" height="1.5" fill="#dcdcdc" stroke="#b0b0b0" stroke-width="0.5"/><rect x="21.5" y="23.5" width="10" height="3.2" rx="0.4" fill="#f7f7f7" stroke="#a2a2a2" stroke-width="1"/><rect x="28.6" y="24.6" width="2" height="1" fill="#1fc4d8"/><rect x="21.5" y="28.5" width="10" height="3.2" rx="0.4" fill="#f7f7f7" stroke="#a2a2a2" stroke-width="1"/><rect x="28.6" y="29.6" width="2" height="1" fill="#1fc4d8"/><path d="M11 28h10" stroke="#1c7db8" stroke-width="2" stroke-dasharray="1 1"/><path d="M16 22.6v5" stroke="#1c7db8" stroke-width="2" stroke-dasharray="1 1.4"/><defs><linearGradient id="cg2" x1="0" y1="0" x2="0" y2="1"><stop offset="0" stop-color="#ffffff"/><stop offset="1" stop-color="#cfe8f8"/></linearGradient></defs><path d="M11.8 22.2H20a3.4 3.4 0 0 0 .5-6.8 4.9 4.9 0 0 0-9.2-1 3.9 3.9 0 0 0 .5 7.8z" fill="url(#cg2)" stroke="#a4d3ee" stroke-width="1"/></svg>
<svg style="left:642px;top:96px;" width="34" height="33" viewBox="0 0 34 33"><path d="M1 4.5L4.5 0.6h22L30 4.5" fill="#f6f6f6" stroke="#757575" stroke-width="1"/><rect x="0.5" y="4.5" width="30" height="7.5" rx="1.4" fill="#fafafa" stroke="#737373" stroke-width="1"/><rect x="2.5" y="6.7" width="18" height="3" fill="#1f1f1f"/><path d="M3.5 8.2h16" stroke="#bdbdbd" stroke-width="0.9" stroke-dasharray="2 1.3"/><path d="M21.8 8.2h7" stroke="#4a4a4a" stroke-width="3" stroke-dasharray="0.8 0.5"/><rect x="1.5" y="12.4" width="28" height="1" fill="#d9d9d9"/><rect x="0.5" y="13.5" width="30" height="7.5" rx="1.4" fill="#fafafa" stroke="#737373" stroke-width="1"/><rect x="2.5" y="15.7" width="18" height="3" fill="#1f1f1f"/><path d="M3.5 17.2h16" stroke="#bdbdbd" stroke-width="0.9" stroke-dasharray="2 1.3"/><path d="M21.8 17.2h7" stroke="#4a4a4a" stroke-width="3" stroke-dasharray="0.8 0.5"/><rect x="1.5" y="21.4" width="28" height="1" fill="#d9d9d9"/><rect x="0.5" y="23" width="30" height="8" rx="1.4" fill="#fafafa" stroke="#737373" stroke-width="1"/><rect x="2.5" y="25.2" width="18" height="3" fill="#1f1f1f"/><path d="M3.5 26.7h16" stroke="#bdbdbd" stroke-width="0.9" stroke-dasharray="2 1.3"/><path d="M21.8 26.7h7" stroke="#4a4a4a" stroke-width="3" stroke-dasharray="0.8 0.5"/><path d="M16.5 31.2h12a3.5 3.5 0 0 0 .5-7 5 5 0 0 0-9.5-1 4.1 4.1 0 0 0-3 8z" fill="#fbfdff" stroke="#8cc8ec" stroke-width="1.3"/></svg>
<!-- quick view -->
<div class="a" style="left:257px;top:206px;width:1080px;height:506px;border-left:1px solid #8fb0dc;border-right:1px solid #7da5d9;background:#fff;border-radius:3px 0 0 0"></div>
<div class="a" style="left:257px;top:206px;width:1080px;height:20px;background:linear-gradient(#7fa7db 0%,#9dbde5 18%,#c9dbf1 45%,#eef3fb 75%,#ffffff 100%);border-top:1px solid #7aa0d4;border-left:1px solid #a4bde0;border-radius:3px 0 0 0"></div>
<div class="a" style="left:258px;top:226px;width:1078px;height:1px;background:#b5b5b5"></div>
<div class="t" style="left:262.5px;top:209.5px;font-size:13px;letter-spacing:0.52px;color:#1d2236;font-weight:bold;line-height:16px;height:16px;margin-top:-1px;">Quick-View</div>
<div class="a" style="left:262px;top:231px;width:202px;height:24px;border:1px solid #c4c4c4;background:#fff"></div>
<svg style="left:268px;top:235px;" width="17" height="16" viewBox="0 0 17 16"><defs><linearGradient id="cg" x1="0" y1="0" x2="0" y2="1"><stop offset="0" stop-color="#ffffff"/><stop offset="1" stop-color="#cfe6f7"/></linearGradient></defs><path d="M4 12h10a3.2 3.2 0 0 0 .5-6.3 4.8 4.8 0 0 0-9.1-1A3.8 3.8 0 0 0 4 12z" fill="url(#cg)" stroke="#9fcbea" stroke-width="1.1"/><rect x="10.6" y="6.6" width="4" height="4.4" fill="#2b66ae"/><rect x="7.3" y="12.2" width="3.3" height="3.3" fill="#2b66ae"/><rect x="13" y="12.2" width="3.6" height="3.3" fill="#2b66ae"/></svg>
<div class="t" style="left:291.0px;top:236.0px;font-size:11px;letter-spacing:-0.44px;">Fabrics</div>
<div class="a" style="left:262px;top:259px;width:202px;height:455px;border:1px solid #bdbdbd;border-bottom:none;background:#fff"></div>
<div class="a" style="left:263px;top:260px;width:186px;height:20px;background:#dce9fb"></div>
<div class="a" style="left:449px;top:260px;width:14px;height:452px;background:#f3f3f3;border-left:1px solid #dcdcdc"></div>
<div class="a" style="left:449px;top:260px;width:14px;height:15px;background:linear-gradient(#f8f8f8,#e6e6e6)"></div>
<svg style="left:453px;top:266px;" width="6" height="4" viewBox="0 0 6 4"><path d="M0 4h6L3 0z" fill="#333"/></svg>
<div class="a" style="left:448px;top:275px;width:15px;height:437px;background:#fff;border:1px solid #c2c2c2"></div>
<svg style="left:267px;top:264.0px;" width="9" height="9" viewBox="0 0 9 9"><rect x="0" y="0" width="9" height="9" rx="1" fill="#969696"/><path d="M2 4.5h5" stroke="#fff" stroke-width="1.2"/></svg>
<svg style="left:278.5px;top:264.5px;" width="13" height="11" viewBox="0 0 13 11"><path d="M0.7 9.4C0.4 6.4 1.8 3.6 4 2.8 5.2 0.1 9.4 0 10.5 3c.9.6 1.4 1.7 1.4 2.9L7 9.4z" fill="#eef6fc" stroke="#6fb0d8" stroke-width="1"/><path d="M2 8.6C2 6.4 3.2 4.6 5 4 6 2.2 8.6 2 9.6 3.8" fill="none" stroke="#ffffff" stroke-width="1"/><rect x="7.2" y="5" width="1.9" height="1.9" fill="#1d4f86"/><rect x="5.2" y="8" width="2.1" height="2.1" fill="#1d4f86"/><rect x="9.3" y="8" width="2.1" height="2.1" fill="#1d4f86"/></svg>
<div class="t" style="left:296.2px;top:262.2px;font-size:11px;letter-spacing:-0.37px;">Summary</div>
<svg style="left:279.2px;top:284.4px;" width="9" height="9" viewBox="0 0 9 9"><rect x="0" y="0" width="9" height="9" rx="1" fill="#969696"/><path d="M2 4.5h5" stroke="#fff" stroke-width="1.2"/><path d="M4.5 2v5" stroke="#fff" stroke-width="1.2"/></svg>
<svg style="left:290.7px;top:284.5px;" width="13" height="11" viewBox="0 0 13 11"><path d="M0.7 9.4C0.4 6.4 1.8 3.6 4 2.8 5.2 0.1 9.4 0 10.5 3c.9.6 1.4 1.7 1.4 2.9L7 9.4z" fill="#eef6fc" stroke="#6fb0d8" stroke-width="1"/><path d="M2 8.6C2 6.4 3.2 4.6 5 4 6 2.2 8.6 2 9.6 3.8" fill="none" stroke="#ffffff" stroke-width="1"/><rect x="7.2" y="5" width="1.9" height="1.9" fill="#1d4f86"/><rect x="5.2" y="8" width="2.1" height="2.1" fill="#1d4f86"/><rect x="9.3" y="8" width="2.1" height="2.1" fill="#1d4f86"/></svg>
<div class="t" style="left:308.7px;top:282.2px;font-size:11px;letter-spacing:-0.58px;">100000051E9B7EDC</div>
<svg style="left:428.2px;top:285.4px;" width="10.2" height="10.2" viewBox="0 0 10.2 10.2"><circle cx="5.1" cy="5.1" r="4.6" fill="url(#okg)" stroke="#128a25" stroke-width="0.8"/><path d="M2.3999999999999995 5.199999999999999l1.9 2 3.2-4" fill="none" stroke="#fff" stroke-width="1.6"/></svg>
<svg style="left:279.2px;top:304.4px;" width="9" height="9" viewBox="0 0 9 9"><rect x="0" y="0" width="9" height="9" rx="1" fill="#969696"/><path d="M2 4.5h5" stroke="#fff" stroke-width="1.2"/><path d="M4.5 2v5" stroke="#fff" stroke-width="1.2"/></svg>
<svg style="left:290.7px;top:304.5px;" width="13" height="11" viewBox="0 0 13 11"><path d="M0.7 9.4C0.4 6.4 1.8 3.6 4 2.8 5.2 0.1 9.4 0 10.5 3c.9.6 1.4 1.7 1.4 2.9L7 9.4z" fill="#eef6fc" stroke="#6fb0d8" stroke-width="1"/><path d="M2 8.6C2 6.4 3.2 4.6 5 4 6 2.2 8.6 2 9.6 3.8" fill="none" stroke="#ffffff" stroke-width="1"/><rect x="7.2" y="5" width="1.9" height="1.9" fill="#1d4f86"/><rect x="5.2" y="8" width="2.1" height="2.1" fill="#1d4f86"/><rect x="9.3" y="8" width="2.1" height="2.1" fill="#1d4f86"/></svg>
<div class="t" style="left:308.7px;top:302.2px;font-size:11px;letter-spacing:-0.44px;">100000051EB352B3</div>
<svg style="left:428.2px;top:305.4px;" width="10.2" height="10.2" viewBox="0 0 10.2 10.2"><circle cx="5.1" cy="5.1" r="4.6" fill="url(#okg)" stroke="#128a25" stroke-width="0.8"/><path d="M2.3999999999999995 5.199999999999999l1.9 2 3.2-4" fill="none" stroke="#fff" stroke-width="1.6"/></svg>
<svg style="left:279.2px;top:324.4px;" width="9" height="9" viewBox="0 0 9 9"><rect x="0" y="0" width="9" height="9" rx="1" fill="#969696"/><path d="M2 4.5h5" stroke="#fff" stroke-width="1.2"/><path d="M4.5 2v5" stroke="#fff" stroke-width="1.2"/></svg>
<svg style="left:290.7px;top:324.5px;" width="13" height="11" viewBox="0 0 13 11"><path d="M0.7 9.4C0.4 6.4 1.8 3.6 4 2.8 5.2 0.1 9.4 0 10.5 3c.9.6 1.4 1.7 1.4 2.9L7 9.4z" fill="#eef6fc" stroke="#6fb0d8" stroke-width="1"/><path d="M2 8.6C2 6.4 3.2 4.6 5 4 6 2.2 8.6 2 9.6 3.8" fill="none" stroke="#ffffff" stroke-width="1"/><rect x="7.2" y="5" width="1.9" height="1.9" fill="#1d4f86"/><rect x="5.2" y="8" width="2.1" height="2.1" fill="#1d4f86"/><rect x="9.3" y="8" width="2.1" height="2.1" fill="#1d4f86"/></svg>
<div class="t" style="left:308.7px;top:322.2px;font-size:11px;letter-spacing:-0.44px;">100000051EB352B4</div>
<svg style="left:428.2px;top:325.4px;" width="10.2" height="10.2" viewBox="0 0 10.2 10.2"><circle cx="5.1" cy="5.1" r="4.6" fill="url(#okg)" stroke="#128a25" stroke-width="0.8"/><path d="M2.3999999999999995 5.199999999999999l1.9 2 3.2-4" fill="none" stroke="#fff" stroke-width="1.6"/></svg>
<svg style="left:279.2px;top:344.4px;" width="9" height="9" viewBox="0 0 9 9"><rect x="0" y="0" width="9" height="9" rx="1" fill="#969696"/><path d="M2 4.5h5" stroke="#fff" stroke-width="1.2"/><path d="M4.5 2v5" stroke="#fff" stroke-width="1.2"/></svg>
<svg style="left:290.7px;top:344.5px;" width="13" height="11" viewBox="0 0 13 11"><path d="M0.7 9.4C0.4 6.4 1.8 3.6 4 2.8 5.2 0.1 9.4 0 10.5 3c.9.6 1.4 1.7 1.4 2.9L7 9.4z" fill="#eef6fc" stroke="#6fb0d8" stroke-width="1"/><path d="M2 8.6C2 6.4 3.2 4.6 5 4 6 2.2 8.6 2 9.6 3.8" fill="none" stroke="#ffffff" stroke-width="1"/><rect x="7.2" y="5" width="1.9" height="1.9" fill="#1d4f86"/><rect x="5.2" y="8" width="2.1" height="2.1" fill="#1d4f86"/><rect x="9.3" y="8" width="2.1" height="2.1" fill="#1d4f86"/></svg>
<div class="t" style="left:308.7px;top:342.2px;font-size:11px;letter-spacing:-0.44px;">100000051EB352B5</div>
<svg style="left:428.2px;top:345.4px;" width="10.2" height="10.2" viewBox="0 0 10.2 10.2"><circle cx="5.1" cy="5.1" r="4.6" fill="url(#okg)" stroke="#128a25" stroke-width="0.8"/><path d="M2.3999999999999995 5.199999999999999l1.9 2 3.2-4" fill="none" stroke="#fff" stroke-width="1.6"/></svg>
<svg style="left:279.2px;top:364.4px;" width="9" height="9" viewBox="0 0 9 9"><rect x="0" y="0" width="9" height="9" rx="1" fill="#969696"/><path d="M2 4.5h5" stroke="#fff" stroke-width="1.2"/><path d="M4.5 2v5" stroke="#fff" stroke-width="1.2"/></svg>
<svg style="left:290.7px;top:364.5px;" width="13" height="11" viewBox="0 0 13 11"><path d="M0.7 9.4C0.4 6.4 1.8 3.6 4 2.8 5.2 0.1 9.4 0 10.5 3c.9.6 1.4 1.7 1.4 2.9L7 9.4z" fill="#eef6fc" stroke="#6fb0d8" stroke-width="1"/><path d="M2 8.6C2 6.4 3.2 4.6 5 4 6 2.2 8.6 2 9.6 3.8" fill="none" stroke="#ffffff" stroke-width="1"/><rect x="7.2" y="5" width="1.9" height="1.9" fill="#1d4f86"/><rect x="5.2" y="8" width="2.1" height="2.1" fill="#1d4f86"/><rect x="9.3" y="8" width="2.1" height="2.1" fill="#1d4f86"/></svg>
<div class="t" style="left:308.7px;top:362.2px;font-size:11px;letter-spacing:0.00px;"><span style="letter-spacing:-0.38px">Fabric_mds</span><span style="letter-spacing:-0.12px">9148</span><span style="letter-spacing:-0.38px">-</span><span style="letter-spacing:-0.12px">2</span></div>
<svg style="left:428.2px;top:365.4px;" width="10.2" height="10.2" viewBox="0 0 10.2 10.2"><circle cx="5.1" cy="5.1" r="4.6" fill="url(#okg)" stroke="#128a25" stroke-width="0.8"/><path d="M2.3999999999999995 5.199999999999999l1.9 2 3.2-4" fill="none" stroke="#fff" stroke-width="1.6"/></svg>
<div class="a" style="left:468px;top:231px;width:864px;height:24px;border:1px solid #c4c4c4;background:#fff"></div>
<div class="t" style="left:473.0px;top:238.0px;font-size:11px;letter-spacing:-0.27px;">Fabrics Summary (All Fabrics)</div>
<div class="a" style="left:1264px;top:234px;width:65px;height:18px;border:1px solid #b7b7b7;background:#e1e1e1"></div>
<svg style="left:1267px;top:237px;" width="12" height="12" viewBox="0 0 12 12"><path d="M3.5 2.8V2.6a1.2 1.2 0 0 1 1.2-1.2h4.6a1.2 1.2 0 0 1 1.2 1.2v6.6a1.2 1.2 0 0 1-1.2 1.2H4.7a1.2 1.2 0 0 1-1.2-1.2V8.6" fill="none" stroke="#3a76c4" stroke-width="1.1"/><path d="M1.2 4.2c.6 1 1.6 1.6 3 1.6V3.6L8.2 6 4.2 8.4V6.9C2.8 6.9 1.8 6.2 1.2 4.2z" fill="#2f6fc0"/></svg>
<div class="t" style="left:1285.0px;top:235.0px;font-size:11px;letter-spacing:-0.05px;color:#1b2440;font-weight:bold;">Explore</div>
<!-- chart panels -->
<svg width="0" height="0" style="left:0;top:0"><defs><linearGradient id="pg" x1="0" y1="0" x2="0" y2="1"><stop offset="0" stop-color="#fdfdff"/><stop offset="1" stop-color="#f4f5fb"/></linearGradient></defs></svg>
<div class="t" style="left:468.0px;top:259.0px;font-size:11px;letter-spacing:-0.16px;color:#1b2440;font-weight:bold;">Fabrics</div>
<div class="a" style="left:468px;top:276px;width:284px;height:184px;border:1px solid #a8a8a8;border-radius:3px 3px 0 0;background:#fff"></div>
<div class="a" style="left:469px;top:277px;width:282px;height:19px;background:linear-gradient(#ffffff,#eeeeee);border-radius:2px 2px 0 0"></div>
<div class="a" style="left:469px;top:296px;width:282px;height:1px;background:#b4b4b4"></div>
<div class="t" style="left:473.5px;top:279.9px;font-size:11px;letter-spacing:0.17px;color:#959595;font-weight:bold;">Highest Data Rate</div>
<svg style="left:0px;top:0px;" width="1339" height="714" viewBox="0 0 1339 714"><rect x="495.09999999999997" y="310.4" width="210.7" height="51.80000000000001" fill="url(#pg)"/><path d="M495.09999999999997 310.5H705.8" stroke="#e6e9f4" stroke-width="1"/><path d="M495.09999999999997 336.29999999999995H705.8" stroke="#e6e9f4" stroke-width="1"/><path d="M495.59999999999997 310.4V362.2" stroke="#e3e6f0" stroke-width="1"/><path d="M495.09999999999997 362.2H705.8" stroke="#333" stroke-width="1.2"/><path d="M705.8 310.4V362.7" stroke="#333" stroke-width="1.2"/><path d="M703.3 310.4h5" stroke="#333" stroke-width="1"/><path d="M703.3 323.3h5" stroke="#333" stroke-width="1"/><path d="M703.3 336.3h5" stroke="#333" stroke-width="1"/><path d="M703.3 349.2h5" stroke="#333" stroke-width="1"/><path d="M498.5 360.0v4.6" stroke="#333" stroke-width="1"/><path d="M516.0 360.0v4.6" stroke="#333" stroke-width="1"/><path d="M533.4 360.0v4.6" stroke="#333" stroke-width="1"/><path d="M550.9 360.0v4.6" stroke="#333" stroke-width="1"/><path d="M568.3 360.0v4.6" stroke="#333" stroke-width="1"/><path d="M585.8 360.0v4.6" stroke="#333" stroke-width="1"/><path d="M603.2 360.0v4.6" stroke="#333" stroke-width="1"/><path d="M620.6 360.0v4.6" stroke="#333" stroke-width="1"/><path d="M638.1 360.0v4.6" stroke="#333" stroke-width="1"/><path d="M655.5 360.0v4.6" stroke="#333" stroke-width="1"/><path d="M673.0 360.0v4.6" stroke="#333" stroke-width="1"/><path d="M690.5 360.0v4.6" stroke="#333" stroke-width="1"/><path d="M495.1 360.8 L556.3 359.6 L609.4 331.5 L661.4 359.8" fill="none" stroke="#3c9af2" stroke-width="1.25" stroke-linejoin="round"/><path d="M495.1 359.3 L498.7 360.6 L608.7 360.4 L661.4 359.3" fill="none" stroke="#e8740c" stroke-width="1.25" stroke-linejoin="round"/><path d="M495.1 361.6 L661.7 361.9" fill="none" stroke="#8a5fd0" stroke-width="1.25" stroke-linejoin="round"/></svg>
<div class="t" style="left:486.5px;top:365.8px;font-size:9.5px;letter-spacing:-0.16px;color:#333;">22:25</div>
<div class="t" style="left:521.4px;top:365.8px;font-size:9.5px;letter-spacing:-0.16px;color:#333;">22:35</div>
<div class="t" style="left:556.3px;top:365.8px;font-size:9.5px;letter-spacing:-0.16px;color:#333;">22:45</div>
<div class="t" style="left:591.2px;top:365.8px;font-size:9.5px;letter-spacing:-0.16px;color:#333;">22:55</div>
<div class="t" style="left:626.1px;top:365.8px;font-size:9.5px;letter-spacing:-0.16px;color:#333;">23:05</div>
<div class="t" style="left:661.0px;top:365.8px;font-size:9.5px;letter-spacing:-0.16px;color:#333;">23:15</div>
<div class="t" style="left:709.6px;top:304.0px;font-size:9.5px;letter-spacing:0.21px;color:#333;">80</div>
<div class="t" style="left:709.6px;top:329.9px;font-size:9.5px;letter-spacing:0.21px;color:#333;">40</div>
<div class="t" style="left:709.6px;top:355.8px;font-size:9.5px;letter-spacing:0.20px;color:#333;">0</div>
<div class="t" style="left:726.7px;top:336.3px;width:0;height:0;overflow:visible"><div style="position:absolute;white-space:pre;font-size:9.5px;color:#333;letter-spacing:-0.29px;line-height:14px;transform:translate(-50%,-50%) rotate(90deg);transform-origin:50% 50%;left:0;top:0">MB/s</div></div>
<div class="a" style="left:473px;top:381px;width:274px;height:71px;background:#d6d6d6"></div>
<div class="a" style="left:474px;top:382px;width:22px;height:15px;background:#e7e7e7"></div>
<div class="a" style="left:497px;top:382px;width:107px;height:15px;background:#e7e7e7"></div>
<div class="a" style="left:605px;top:382px;width:70px;height:15px;background:#f0f0f0"></div>
<div class="a" style="left:676px;top:382px;width:70px;height:15px;background:#e7e7e7"></div>
<div class="t" style="left:536.0px;top:383.0px;font-size:11px;letter-spacing:-0.43px;color:#7a7a7a;">Fabric</div>
<div class="t" style="left:624.0px;top:383.0px;font-size:11px;letter-spacing:-0.31px;color:#7a7a7a;">Rate</div>
<svg style="left:648.5px;top:389px;" width="7" height="4" viewBox="0 0 7 4"><path d="M0 0h7L3.5 4z" fill="#5b6f8f"/></svg>
<div class="t" style="left:692.0px;top:383.0px;font-size:11px;letter-spacing:0.04px;color:#7a7a7a;">Current</div>
<div class="a" style="left:474px;top:398px;width:22px;height:17px;background:#ffffff"></div>
<div class="a" style="left:497px;top:398px;width:107px;height:17px;background:#ffffff"></div>
<div class="a" style="left:605px;top:398px;width:70px;height:17px;background:#ffffff"></div>
<div class="a" style="left:676px;top:398px;width:70px;height:17px;background:#ffffff"></div>
<div class="a" style="left:482px;top:403.5px;width:7px;height:7px;background:#3c9af2"></div>
<div class="t" style="left:501.0px;top:399.6px;font-size:11px;letter-spacing:-0.44px;">100000051EB352B3</div>
<div class="t" style="left:624.5px;top:399.6px;font-size:11px;letter-spacing:0.00px;"><span style="letter-spacing:-0.12px">14</span><span style="letter-spacing:-0.28px">.</span><span style="letter-spacing:-0.12px">2</span><span style="letter-spacing:-0.28px"> MB/s</span></div>
<div class="t" style="left:701.5px;top:399.6px;font-size:11px;letter-spacing:0.00px;"><span style="letter-spacing:-0.12px">4</span><span style="letter-spacing:-0.28px">.</span><span style="letter-spacing:-0.12px">3</span><span style="letter-spacing:-0.28px"> MB/s</span></div>
<div class="a" style="left:474px;top:416px;width:22px;height:17px;background:#eeeeee"></div>
<div class="a" style="left:497px;top:416px;width:107px;height:17px;background:#eeeeee"></div>
<div class="a" style="left:605px;top:416px;width:70px;height:17px;background:#eeeeee"></div>
<div class="a" style="left:676px;top:416px;width:70px;height:17px;background:#eeeeee"></div>
<div class="a" style="left:482px;top:421.5px;width:7px;height:7px;background:#e8740c"></div>
<div class="t" style="left:501.0px;top:417.6px;font-size:11px;letter-spacing:0.00px;"><span style="letter-spacing:-0.38px">Fabric_mds</span><span style="letter-spacing:-0.12px">9148</span><span style="letter-spacing:-0.38px">-</span><span style="letter-spacing:-0.12px">2</span></div>
<div class="t" style="left:630.5px;top:417.6px;font-size:11px;letter-spacing:0.00px;"><span style="letter-spacing:-0.12px">2</span><span style="letter-spacing:-0.28px">.</span><span style="letter-spacing:-0.12px">8</span><span style="letter-spacing:-0.28px"> MB/s</span></div>
<div class="t" style="left:701.5px;top:417.6px;font-size:11px;letter-spacing:0.00px;"><span style="letter-spacing:-0.12px">4</span><span style="letter-spacing:-0.28px">.</span><span style="letter-spacing:-0.12px">5</span><span style="letter-spacing:-0.28px"> MB/s</span></div>
<div class="a" style="left:474px;top:434px;width:22px;height:17px;background:#dce9fb"></div>
<div class="a" style="left:497px;top:434px;width:107px;height:17px;background:#dce9fb"></div>
<div class="a" style="left:605px;top:434px;width:70px;height:17px;background:#dce9fb"></div>
<div class="a" style="left:676px;top:434px;width:70px;height:17px;background:#dce9fb"></div>
<div class="a" style="left:482px;top:439.5px;width:7px;height:7px;background:#8a5fd0"></div>
<div class="t" style="left:501.0px;top:435.6px;font-size:11px;letter-spacing:-0.58px;">100000051E9B7EDC</div>
<div class="t" style="left:620.0px;top:435.6px;font-size:11px;letter-spacing:0.00px;"><span style="letter-spacing:-0.12px">338</span><span style="letter-spacing:-0.23px">.</span><span style="letter-spacing:-0.12px">6</span><span style="letter-spacing:-0.23px"> KB/s</span></div>
<div class="t" style="left:691.0px;top:435.6px;font-size:11px;letter-spacing:0.00px;"><span style="letter-spacing:-0.12px">361</span><span style="letter-spacing:-0.23px">.</span><span style="letter-spacing:-0.12px">4</span><span style="letter-spacing:-0.23px"> KB/s</span></div>
<div class="a" style="left:756px;top:276px;width:284px;height:184px;border:1px solid #a8a8a8;border-radius:3px 3px 0 0;background:#fff"></div>
<div class="a" style="left:757px;top:277px;width:282px;height:19px;background:linear-gradient(#ffffff,#eeeeee);border-radius:2px 2px 0 0"></div>
<div class="a" style="left:757px;top:296px;width:282px;height:1px;background:#b4b4b4"></div>
<div class="t" style="left:761.5px;top:279.9px;font-size:11px;letter-spacing:0.09px;color:#959595;font-weight:bold;">Highest Link Error Rate</div>
<svg style="left:0px;top:0px;" width="1339" height="714" viewBox="0 0 1339 714"><rect x="783.1" y="310.4" width="215.30000000000007" height="51.80000000000001" fill="url(#pg)"/><path d="M783.1 310.5H998.4000000000001" stroke="#e6e9f4" stroke-width="1"/><path d="M783.6 310.4V362.2" stroke="#e3e6f0" stroke-width="1"/><path d="M783.1 362.2H998.4000000000001" stroke="#333" stroke-width="1.2"/><path d="M998.4000000000001 310.4V362.7" stroke="#333" stroke-width="1.2"/><path d="M995.9000000000001 310.4h5" stroke="#333" stroke-width="1"/><path d="M995.9000000000001 336.3h5" stroke="#333" stroke-width="1"/><path d="M785.8 360.0v4.6" stroke="#333" stroke-width="1"/><path d="M803.7 360.0v4.6" stroke="#333" stroke-width="1"/><path d="M821.7 360.0v4.6" stroke="#333" stroke-width="1"/><path d="M839.6 360.0v4.6" stroke="#333" stroke-width="1"/><path d="M857.6 360.0v4.6" stroke="#333" stroke-width="1"/><path d="M875.5 360.0v4.6" stroke="#333" stroke-width="1"/><path d="M893.4 360.0v4.6" stroke="#333" stroke-width="1"/><path d="M911.4 360.0v4.6" stroke="#333" stroke-width="1"/><path d="M929.3 360.0v4.6" stroke="#333" stroke-width="1"/><path d="M947.3 360.0v4.6" stroke="#333" stroke-width="1"/><path d="M965.2 360.0v4.6" stroke="#333" stroke-width="1"/><path d="M983.1 360.0v4.6" stroke="#333" stroke-width="1"/><path d="M783.1 362.2 L953.7 362.2" fill="none" stroke="#8a5fd0" stroke-width="1.25" stroke-linejoin="round"/></svg>
<div class="t" style="left:773.8px;top:365.8px;font-size:9.5px;letter-spacing:-0.16px;color:#333;">22:25</div>
<div class="t" style="left:809.7px;top:365.8px;font-size:9.5px;letter-spacing:-0.16px;color:#333;">22:35</div>
<div class="t" style="left:845.6px;top:365.8px;font-size:9.5px;letter-spacing:-0.16px;color:#333;">22:45</div>
<div class="t" style="left:881.4px;top:365.8px;font-size:9.5px;letter-spacing:-0.16px;color:#333;">22:55</div>
<div class="t" style="left:917.3px;top:365.8px;font-size:9.5px;letter-spacing:-0.16px;color:#333;">23:05</div>
<div class="t" style="left:953.2px;top:365.8px;font-size:9.5px;letter-spacing:-0.16px;color:#333;">23:15</div>
<div class="t" style="left:1002.2px;top:304.0px;font-size:9.5px;letter-spacing:0.20px;color:#333;">1</div>
<div class="t" style="left:1002.2px;top:355.8px;font-size:9.5px;letter-spacing:0.20px;color:#333;">0</div>
<div class="t" style="left:1013.7px;top:335.3px;width:0;height:0;overflow:visible"><div style="position:absolute;white-space:pre;font-size:9.5px;color:#333;letter-spacing:-0.03px;line-height:14px;transform:translate(-50%,-50%) rotate(90deg);transform-origin:50% 50%;left:0;top:0">errors/s</div></div>
<div class="a" style="left:761px;top:381px;width:274px;height:71px;background:#d6d6d6"></div>
<div class="a" style="left:762px;top:382px;width:22px;height:15px;background:#e7e7e7"></div>
<div class="a" style="left:785px;top:382px;width:107px;height:15px;background:#e7e7e7"></div>
<div class="a" style="left:893px;top:382px;width:70px;height:15px;background:#f0f0f0"></div>
<div class="a" style="left:964px;top:382px;width:70px;height:15px;background:#e7e7e7"></div>
<div class="t" style="left:824.0px;top:383.0px;font-size:11px;letter-spacing:-0.43px;color:#7a7a7a;">Fabric</div>
<div class="t" style="left:908.5px;top:383.0px;font-size:11px;letter-spacing:-0.16px;color:#7a7a7a;">Errors</div>
<svg style="left:940.0px;top:389px;" width="7" height="4" viewBox="0 0 7 4"><path d="M0 0h7L3.5 4z" fill="#5b6f8f"/></svg>
<div class="t" style="left:980.0px;top:383.0px;font-size:11px;letter-spacing:0.04px;color:#7a7a7a;">Current</div>
<div class="a" style="left:762px;top:398px;width:22px;height:17px;background:#dce9fb"></div>
<div class="a" style="left:785px;top:398px;width:107px;height:17px;background:#dce9fb"></div>
<div class="a" style="left:893px;top:398px;width:70px;height:17px;background:#dce9fb"></div>
<div class="a" style="left:964px;top:398px;width:70px;height:17px;background:#dce9fb"></div>
<div class="a" style="left:770px;top:403.5px;width:7px;height:7px;background:#8a5fd0"></div>
<div class="t" style="left:789.0px;top:399.6px;font-size:11px;letter-spacing:-0.44px;">100000051EB352B4</div>
<div class="t" style="left:905.0px;top:399.6px;font-size:11px;letter-spacing:0.00px;"><span style="letter-spacing:-0.12px">0</span><span style="letter-spacing:-0.04px">.</span><span style="letter-spacing:-0.12px">0</span><span style="letter-spacing:-0.04px"> errors/s</span></div>
<div class="t" style="left:976.0px;top:399.6px;font-size:11px;letter-spacing:0.00px;"><span style="letter-spacing:-0.12px">0</span><span style="letter-spacing:-0.04px">.</span><span style="letter-spacing:-0.12px">0</span><span style="letter-spacing:-0.04px"> errors/s</span></div>
<div class="a" style="left:762px;top:416px;width:22px;height:17px;background:#eeeeee"></div>
<div class="a" style="left:785px;top:416px;width:107px;height:17px;background:#eeeeee"></div>
<div class="a" style="left:893px;top:416px;width:70px;height:17px;background:#eeeeee"></div>
<div class="a" style="left:964px;top:416px;width:70px;height:17px;background:#eeeeee"></div>
<div class="a" style="left:770px;top:421.5px;width:7px;height:7px;background:#e8740c"></div>
<div class="t" style="left:789.0px;top:417.6px;font-size:11px;letter-spacing:-0.44px;">100000051EB352B3</div>
<div class="t" style="left:905.0px;top:417.6px;font-size:11px;letter-spacing:0.00px;"><span style="letter-spacing:-0.12px">0</span><span style="letter-spacing:-0.04px">.</span><span style="letter-spacing:-0.12px">0</span><span style="letter-spacing:-0.04px"> errors/s</span></div>
<div class="t" style="left:976.0px;top:417.6px;font-size:11px;letter-spacing:0.00px;"><span style="letter-spacing:-0.12px">0</span><span style="letter-spacing:-0.04px">.</span><span style="letter-spacing:-0.12px">0</span><span style="letter-spacing:-0.04px"> errors/s</span></div>
<div class="a" style="left:762px;top:434px;width:22px;height:17px;background:#ffffff"></div>
<div class="a" style="left:785px;top:434px;width:107px;height:17px;background:#ffffff"></div>
<div class="a" style="left:893px;top:434px;width:70px;height:17px;background:#ffffff"></div>
<div class="a" style="left:964px;top:434px;width:70px;height:17px;background:#ffffff"></div>
<div class="a" style="left:770px;top:439.5px;width:7px;height:7px;background:#3c9af2"></div>
<div class="t" style="left:789.0px;top:435.6px;font-size:11px;letter-spacing:-0.58px;">100000051E9B7EDC</div>
<div class="t" style="left:905.0px;top:435.6px;font-size:11px;letter-spacing:0.00px;"><span style="letter-spacing:-0.12px">0</span><span style="letter-spacing:-0.04px">.</span><span style="letter-spacing:-0.12px">0</span><span style="letter-spacing:-0.04px"> errors/s</span></div>
<div class="t" style="left:976.0px;top:435.6px;font-size:11px;letter-spacing:0.00px;"><span style="letter-spacing:-0.12px">0</span><span style="letter-spacing:-0.04px">.</span><span style="letter-spacing:-0.12px">0</span><span style="letter-spacing:-0.04px"> errors/s</span></div>
<div class="a" style="left:1044px;top:276px;width:284px;height:184px;border:1px solid #a8a8a8;border-radius:3px 3px 0 0;background:#fff"></div>
<div class="a" style="left:1045px;top:277px;width:282px;height:19px;background:linear-gradient(#ffffff,#eeeeee);border-radius:2px 2px 0 0"></div>
<div class="a" style="left:1045px;top:296px;width:282px;height:1px;background:#b4b4b4"></div>
<div class="t" style="left:1049.5px;top:279.9px;font-size:11px;letter-spacing:0.12px;color:#959595;font-weight:bold;">Highest non-Link Error Rate</div>
<svg style="left:0px;top:0px;" width="1339" height="714" viewBox="0 0 1339 714"><rect x="1071.5" y="310.4" width="188.70000000000005" height="51.80000000000001" fill="url(#pg)"/><path d="M1071.5 310.5H1260.2" stroke="#e6e9f4" stroke-width="1"/><path d="M1071.5 336.29999999999995H1260.2" stroke="#e6e9f4" stroke-width="1"/><path d="M1072.0 310.4V362.2" stroke="#e3e6f0" stroke-width="1"/><path d="M1071.5 362.2H1260.2" stroke="#333" stroke-width="1.2"/><path d="M1260.2 310.4V362.7" stroke="#333" stroke-width="1.2"/><path d="M1257.7 310.4h5" stroke="#333" stroke-width="1"/><path d="M1257.7 323.3h5" stroke="#333" stroke-width="1"/><path d="M1257.7 336.3h5" stroke="#333" stroke-width="1"/><path d="M1257.7 349.2h5" stroke="#333" stroke-width="1"/><path d="M1073.7 360.0v4.6" stroke="#333" stroke-width="1"/><path d="M1089.4 360.0v4.6" stroke="#333" stroke-width="1"/><path d="M1105.2 360.0v4.6" stroke="#333" stroke-width="1"/><path d="M1120.9 360.0v4.6" stroke="#333" stroke-width="1"/><path d="M1136.6 360.0v4.6" stroke="#333" stroke-width="1"/><path d="M1152.4 360.0v4.6" stroke="#333" stroke-width="1"/><path d="M1168.1 360.0v4.6" stroke="#333" stroke-width="1"/><path d="M1183.8 360.0v4.6" stroke="#333" stroke-width="1"/><path d="M1199.5 360.0v4.6" stroke="#333" stroke-width="1"/><path d="M1215.3 360.0v4.6" stroke="#333" stroke-width="1"/><path d="M1231.0 360.0v4.6" stroke="#333" stroke-width="1"/><path d="M1246.7 360.0v4.6" stroke="#333" stroke-width="1"/><path d="M1071.5 361.5 L1077.7 362.1 L1124.7 361.2 L1149.7 362.0 L1172.7 362.2 L1220.7 361.3" fill="none" stroke="#e8740c" stroke-width="1.25" stroke-linejoin="round"/><path d="M1071.5 362.2 L1220.7 362.2" fill="none" stroke="#8a5fd0" stroke-width="1.25" stroke-linejoin="round"/><path d="M1071.5 335.3 L1079.9 331.0 L1126.8 358.3 L1173.7 329.3 L1220.6 357.6" fill="none" stroke="#3c9af2" stroke-width="1.25" stroke-linejoin="round"/></svg>
<div class="t" style="left:1061.7px;top:365.8px;font-size:9.5px;letter-spacing:-0.16px;color:#333;">22:25</div>
<div class="t" style="left:1093.2px;top:365.8px;font-size:9.5px;letter-spacing:-0.16px;color:#333;">22:35</div>
<div class="t" style="left:1124.6px;top:365.8px;font-size:9.5px;letter-spacing:-0.16px;color:#333;">22:45</div>
<div class="t" style="left:1156.1px;top:365.8px;font-size:9.5px;letter-spacing:-0.16px;color:#333;">22:55</div>
<div class="t" style="left:1187.5px;top:365.8px;font-size:9.5px;letter-spacing:-0.16px;color:#333;">23:05</div>
<div class="t" style="left:1219.0px;top:365.8px;font-size:9.5px;letter-spacing:-0.16px;color:#333;">23:15</div>
<div class="t" style="left:1264.0px;top:304.0px;font-size:9.5px;letter-spacing:-0.18px;color:#333;">8.0E7.0</div>
<div class="t" style="left:1264.0px;top:329.9px;font-size:9.5px;letter-spacing:-0.18px;color:#333;">4.0E7.0</div>
<div class="t" style="left:1264.0px;top:355.8px;font-size:9.5px;letter-spacing:0.09px;color:#333;">0.0</div>
<div class="t" style="left:1301.5px;top:336.3px;width:0;height:0;overflow:visible"><div style="position:absolute;white-space:pre;font-size:9.5px;color:#333;letter-spacing:-0.06px;line-height:14px;transform:translate(-50%,-50%) rotate(90deg);transform-origin:50% 50%;left:0;top:0">errors/frame</div></div>
<div class="a" style="left:1049px;top:381px;width:274px;height:71px;background:#d6d6d6"></div>
<div class="a" style="left:1050px;top:382px;width:22px;height:15px;background:#e7e7e7"></div>
<div class="a" style="left:1073px;top:382px;width:107px;height:15px;background:#e7e7e7"></div>
<div class="a" style="left:1181px;top:382px;width:70px;height:15px;background:#f0f0f0"></div>
<div class="a" style="left:1252px;top:382px;width:70px;height:15px;background:#e7e7e7"></div>
<div class="t" style="left:1112.0px;top:383.0px;font-size:11px;letter-spacing:-0.43px;color:#7a7a7a;">Fabric</div>
<div class="t" style="left:1196.5px;top:383.0px;font-size:11px;letter-spacing:-0.16px;color:#7a7a7a;">Errors</div>
<svg style="left:1228.0px;top:389px;" width="7" height="4" viewBox="0 0 7 4"><path d="M0 0h7L3.5 4z" fill="#5b6f8f"/></svg>
<div class="t" style="left:1268.0px;top:383.0px;font-size:11px;letter-spacing:0.04px;color:#7a7a7a;">Current</div>
<div class="a" style="left:1050px;top:398px;width:22px;height:17px;background:#ffffff"></div>
<div class="a" style="left:1073px;top:398px;width:107px;height:17px;background:#ffffff"></div>
<div class="a" style="left:1181px;top:398px;width:70px;height:17px;background:#ffffff"></div>
<div class="a" style="left:1252px;top:398px;width:70px;height:17px;background:#ffffff"></div>
<div class="a" style="left:1058px;top:403.5px;width:7px;height:7px;background:#3c9af2"></div>
<div class="t" style="left:1077.0px;top:399.6px;font-size:11px;letter-spacing:-0.44px;">100000051EB352B3</div>
<div class="t" style="left:1186.0px;top:399.6px;font-size:11px;letter-spacing:0.00px;"><span style="letter-spacing:-0.12px">27</span><span style="letter-spacing:-0.27px">,</span><span style="letter-spacing:-0.12px">490</span><span style="letter-spacing:-0.27px">,</span><span style="letter-spacing:-0.12px">703</span><span style="letter-spacing:-0.27px">...</span></div>
<div class="t" style="left:1260.0px;top:399.6px;font-size:11px;letter-spacing:0.00px;"><span style="letter-spacing:-0.12px">6</span><span style="letter-spacing:-0.23px">,</span><span style="letter-spacing:-0.12px">593</span><span style="letter-spacing:-0.23px">,</span><span style="letter-spacing:-0.12px">754</span><span style="letter-spacing:-0.23px">....</span></div>
<div class="a" style="left:1050px;top:416px;width:22px;height:17px;background:#eeeeee"></div>
<div class="a" style="left:1073px;top:416px;width:107px;height:17px;background:#eeeeee"></div>
<div class="a" style="left:1181px;top:416px;width:70px;height:17px;background:#eeeeee"></div>
<div class="a" style="left:1252px;top:416px;width:70px;height:17px;background:#eeeeee"></div>
<div class="a" style="left:1058px;top:421.5px;width:7px;height:7px;background:#e8740c"></div>
<div class="t" style="left:1077.0px;top:417.6px;font-size:11px;letter-spacing:-0.58px;">100000051E9B7EDC</div>
<div class="t" style="left:1187.0px;top:417.6px;font-size:11px;letter-spacing:0.00px;"><span style="letter-spacing:-0.12px">36</span><span style="letter-spacing:-0.09px">.</span><span style="letter-spacing:-0.12px">2</span><span style="letter-spacing:-0.09px"> errors...</span></div>
<div class="t" style="left:1258.0px;top:417.6px;font-size:11px;letter-spacing:0.00px;"><span style="letter-spacing:-0.12px">72</span><span style="letter-spacing:-0.09px">.</span><span style="letter-spacing:-0.12px">0</span><span style="letter-spacing:-0.09px"> errors...</span></div>
<div class="a" style="left:1050px;top:434px;width:22px;height:17px;background:#dce9fb"></div>
<div class="a" style="left:1073px;top:434px;width:107px;height:17px;background:#dce9fb"></div>
<div class="a" style="left:1181px;top:434px;width:70px;height:17px;background:#dce9fb"></div>
<div class="a" style="left:1252px;top:434px;width:70px;height:17px;background:#dce9fb"></div>
<div class="a" style="left:1058px;top:439.5px;width:7px;height:7px;background:#8a5fd0"></div>
<div class="t" style="left:1077.0px;top:435.6px;font-size:11px;letter-spacing:-0.44px;">100000051EB352B4</div>
<div class="t" style="left:1186.0px;top:435.6px;font-size:11px;letter-spacing:0.00px;"><span style="letter-spacing:-0.12px">0</span><span style="letter-spacing:-0.01px">.</span><span style="letter-spacing:-0.12px">0</span><span style="letter-spacing:-0.01px"> errors/f...</span></div>
<div class="t" style="left:1257.0px;top:435.6px;font-size:11px;letter-spacing:0.00px;"><span style="letter-spacing:-0.12px">0</span><span style="letter-spacing:-0.01px">.</span><span style="letter-spacing:-0.12px">0</span><span style="letter-spacing:-0.01px"> errors/f...</span></div>
<div class="t" style="left:468.0px;top:464.0px;font-size:11px;letter-spacing:-0.04px;color:#1b2440;font-weight:bold;">FC Switches</div>
<div class="a" style="left:468px;top:481px;width:284px;height:184px;border:1px solid #a8a8a8;border-radius:3px 3px 0 0;background:#fff"></div>
<div class="a" style="left:469px;top:482px;width:282px;height:19px;background:linear-gradient(#ffffff,#eeeeee);border-radius:2px 2px 0 0"></div>
<div class="a" style="left:469px;top:501px;width:282px;height:1px;background:#b4b4b4"></div>
<div class="t" style="left:473.5px;top:484.9px;font-size:11px;letter-spacing:0.17px;color:#959595;font-weight:bold;">Highest Data Rate</div>
<svg style="left:0px;top:0px;" width="1339" height="714" viewBox="0 0 1339 714"><rect x="495.09999999999997" y="515.4" width="210.7" height="51.80000000000007" fill="url(#pg)"/><path d="M495.09999999999997 515.5H705.8" stroke="#e6e9f4" stroke-width="1"/><path d="M495.09999999999997 541.3H705.8" stroke="#e6e9f4" stroke-width="1"/><path d="M495.59999999999997 515.4V567.2" stroke="#e3e6f0" stroke-width="1"/><path d="M495.09999999999997 567.2H705.8" stroke="#333" stroke-width="1.2"/><path d="M705.8 515.4V567.7" stroke="#333" stroke-width="1.2"/><path d="M703.3 515.4h5" stroke="#333" stroke-width="1"/><path d="M703.3 528.4h5" stroke="#333" stroke-width="1"/><path d="M703.3 541.3h5" stroke="#333" stroke-width="1"/><path d="M703.3 554.2h5" stroke="#333" stroke-width="1"/><path d="M498.5 565.0v4.6" stroke="#333" stroke-width="1"/><path d="M516.0 565.0v4.6" stroke="#333" stroke-width="1"/><path d="M533.4 565.0v4.6" stroke="#333" stroke-width="1"/><path d="M550.9 565.0v4.6" stroke="#333" stroke-width="1"/><path d="M568.3 565.0v4.6" stroke="#333" stroke-width="1"/><path d="M585.8 565.0v4.6" stroke="#333" stroke-width="1"/><path d="M603.2 565.0v4.6" stroke="#333" stroke-width="1"/><path d="M620.6 565.0v4.6" stroke="#333" stroke-width="1"/><path d="M638.1 565.0v4.6" stroke="#333" stroke-width="1"/><path d="M655.5 565.0v4.6" stroke="#333" stroke-width="1"/><path d="M673.0 565.0v4.6" stroke="#333" stroke-width="1"/><path d="M690.5 565.0v4.6" stroke="#333" stroke-width="1"/><path d="M495.1 566.2 L598.7 565.6 L660.7 565.2" fill="none" stroke="#8a5fd0" stroke-width="1.25" stroke-linejoin="round"/><path d="M495.1 565.8 L568.7 566.0 L660.7 565.6" fill="none" stroke="#e8740c" stroke-width="1.25" stroke-linejoin="round"/><path d="M495.1 566.0 L558.2 565.6 L608.6 537.2 L660.9 565.3" fill="none" stroke="#3c9af2" stroke-width="1.25" stroke-linejoin="round"/></svg>
<div class="t" style="left:486.5px;top:570.8px;font-size:9.5px;letter-spacing:-0.16px;color:#333;">22:25</div>
<div class="t" style="left:521.4px;top:570.8px;font-size:9.5px;letter-spacing:-0.16px;color:#333;">22:35</div>
<div class="t" style="left:556.3px;top:570.8px;font-size:9.5px;letter-spacing:-0.16px;color:#333;">22:45</div>
<div class="t" style="left:591.2px;top:570.8px;font-size:9.5px;letter-spacing:-0.16px;color:#333;">22:55</div>
<div class="t" style="left:626.1px;top:570.8px;font-size:9.5px;letter-spacing:-0.16px;color:#333;">23:05</div>
<div class="t" style="left:661.0px;top:570.8px;font-size:9.5px;letter-spacing:-0.16px;color:#333;">23:15</div>
<div class="t" style="left:709.6px;top:509.0px;font-size:9.5px;letter-spacing:0.21px;color:#333;">80</div>
<div class="t" style="left:709.6px;top:534.9px;font-size:9.5px;letter-spacing:0.21px;color:#333;">40</div>
<div class="t" style="left:709.6px;top:560.8px;font-size:9.5px;letter-spacing:0.20px;color:#333;">0</div>
<div class="t" style="left:726.7px;top:541.3px;width:0;height:0;overflow:visible"><div style="position:absolute;white-space:pre;font-size:9.5px;color:#333;letter-spacing:-0.29px;line-height:14px;transform:translate(-50%,-50%) rotate(90deg);transform-origin:50% 50%;left:0;top:0">MB/s</div></div>
<div class="a" style="left:473px;top:586px;width:274px;height:71px;background:#d6d6d6"></div>
<div class="a" style="left:474px;top:587px;width:22px;height:15px;background:#e7e7e7"></div>
<div class="a" style="left:497px;top:587px;width:107px;height:15px;background:#e7e7e7"></div>
<div class="a" style="left:605px;top:587px;width:70px;height:15px;background:#f0f0f0"></div>
<div class="a" style="left:676px;top:587px;width:70px;height:15px;background:#e7e7e7"></div>
<div class="t" style="left:534.5px;top:588.0px;font-size:11px;letter-spacing:-0.23px;color:#7a7a7a;">Switch</div>
<div class="t" style="left:624.0px;top:588.0px;font-size:11px;letter-spacing:-0.31px;color:#7a7a7a;">Rate</div>
<svg style="left:648.5px;top:594px;" width="7" height="4" viewBox="0 0 7 4"><path d="M0 0h7L3.5 4z" fill="#5b6f8f"/></svg>
<div class="t" style="left:692.0px;top:588.0px;font-size:11px;letter-spacing:0.04px;color:#7a7a7a;">Current</div>
<div class="a" style="left:474px;top:603px;width:22px;height:17px;background:#ffffff"></div>
<div class="a" style="left:497px;top:603px;width:107px;height:17px;background:#ffffff"></div>
<div class="a" style="left:605px;top:603px;width:70px;height:17px;background:#ffffff"></div>
<div class="a" style="left:676px;top:603px;width:70px;height:17px;background:#ffffff"></div>
<div class="a" style="left:482px;top:608.5px;width:7px;height:7px;background:#3c9af2"></div>
<div class="t" style="left:501.0px;top:604.6px;font-size:11px;letter-spacing:0.00px;"><span style="letter-spacing:-0.37px">brocade</span><span style="letter-spacing:-0.12px">5100</span><span style="letter-spacing:-0.37px">_</span><span style="letter-spacing:-0.12px">5</span></div>
<div class="t" style="left:624.5px;top:604.6px;font-size:11px;letter-spacing:0.00px;"><span style="letter-spacing:-0.12px">12</span><span style="letter-spacing:-0.28px">.</span><span style="letter-spacing:-0.12px">7</span><span style="letter-spacing:-0.28px"> MB/s</span></div>
<div class="t" style="left:701.5px;top:604.6px;font-size:11px;letter-spacing:0.00px;"><span style="letter-spacing:-0.12px">2</span><span style="letter-spacing:-0.28px">.</span><span style="letter-spacing:-0.12px">6</span><span style="letter-spacing:-0.28px"> MB/s</span></div>
<div class="a" style="left:474px;top:621px;width:22px;height:17px;background:#eeeeee"></div>
<div class="a" style="left:497px;top:621px;width:107px;height:17px;background:#eeeeee"></div>
<div class="a" style="left:605px;top:621px;width:70px;height:17px;background:#eeeeee"></div>
<div class="a" style="left:676px;top:621px;width:70px;height:17px;background:#eeeeee"></div>
<div class="a" style="left:482px;top:626.5px;width:7px;height:7px;background:#e8740c"></div>
<div class="t" style="left:501.0px;top:622.6px;font-size:11px;letter-spacing:0.00px;"><span style="letter-spacing:-0.18px">mds</span><span style="letter-spacing:-0.12px">9148</span><span style="letter-spacing:-0.18px">-</span><span style="letter-spacing:-0.12px">2</span><span style="letter-spacing:-0.18px">.vfs.stc....</span></div>
<div class="t" style="left:630.5px;top:622.6px;font-size:11px;letter-spacing:0.00px;"><span style="letter-spacing:-0.12px">1</span><span style="letter-spacing:-0.28px">.</span><span style="letter-spacing:-0.12px">5</span><span style="letter-spacing:-0.28px"> MB/s</span></div>
<div class="t" style="left:701.5px;top:622.6px;font-size:11px;letter-spacing:0.00px;"><span style="letter-spacing:-0.12px">2</span><span style="letter-spacing:-0.28px">.</span><span style="letter-spacing:-0.12px">3</span><span style="letter-spacing:-0.28px"> MB/s</span></div>
<div class="a" style="left:474px;top:639px;width:22px;height:17px;background:#dce9fb"></div>
<div class="a" style="left:497px;top:639px;width:107px;height:17px;background:#dce9fb"></div>
<div class="a" style="left:605px;top:639px;width:70px;height:17px;background:#dce9fb"></div>
<div class="a" style="left:676px;top:639px;width:70px;height:17px;background:#dce9fb"></div>
<div class="a" style="left:482px;top:644.5px;width:7px;height:7px;background:#8a5fd0"></div>
<div class="t" style="left:501.0px;top:640.6px;font-size:11px;letter-spacing:0.00px;"><span style="letter-spacing:-0.37px">brocade</span><span style="letter-spacing:-0.12px">5100</span><span style="letter-spacing:-0.37px">_</span><span style="letter-spacing:-0.12px">1</span></div>
<div class="t" style="left:630.5px;top:640.6px;font-size:11px;letter-spacing:0.00px;"><span style="letter-spacing:-0.12px">1</span><span style="letter-spacing:-0.28px">.</span><span style="letter-spacing:-0.12px">5</span><span style="letter-spacing:-0.28px"> MB/s</span></div>
<div class="t" style="left:701.5px;top:640.6px;font-size:11px;letter-spacing:0.00px;"><span style="letter-spacing:-0.12px">1</span><span style="letter-spacing:-0.28px">.</span><span style="letter-spacing:-0.12px">5</span><span style="letter-spacing:-0.28px"> MB/s</span></div>
<div class="a" style="left:756px;top:481px;width:284px;height:184px;border:1px solid #a8a8a8;border-radius:3px 3px 0 0;background:#fff"></div>
<div class="a" style="left:757px;top:482px;width:282px;height:19px;background:linear-gradient(#ffffff,#eeeeee);border-radius:2px 2px 0 0"></div>
<div class="a" style="left:757px;top:501px;width:282px;height:1px;background:#b4b4b4"></div>
<div class="t" style="left:761.5px;top:484.9px;font-size:11px;letter-spacing:0.09px;color:#959595;font-weight:bold;">Highest Link Error Rate</div>
<svg style="left:0px;top:0px;" width="1339" height="714" viewBox="0 0 1339 714"><rect x="783.1" y="515.4" width="215.30000000000007" height="51.80000000000007" fill="url(#pg)"/><path d="M783.1 515.5H998.4000000000001" stroke="#e6e9f4" stroke-width="1"/><path d="M783.6 515.4V567.2" stroke="#e3e6f0" stroke-width="1"/><path d="M783.1 567.2H998.4000000000001" stroke="#333" stroke-width="1.2"/><path d="M998.4000000000001 515.4V567.7" stroke="#333" stroke-width="1.2"/><path d="M995.9000000000001 515.4h5" stroke="#333" stroke-width="1"/><path d="M995.9000000000001 541.3h5" stroke="#333" stroke-width="1"/><path d="M785.8 565.0v4.6" stroke="#333" stroke-width="1"/><path d="M803.7 565.0v4.6" stroke="#333" stroke-width="1"/><path d="M821.7 565.0v4.6" stroke="#333" stroke-width="1"/><path d="M839.6 565.0v4.6" stroke="#333" stroke-width="1"/><path d="M857.6 565.0v4.6" stroke="#333" stroke-width="1"/><path d="M875.5 565.0v4.6" stroke="#333" stroke-width="1"/><path d="M893.4 565.0v4.6" stroke="#333" stroke-width="1"/><path d="M911.4 565.0v4.6" stroke="#333" stroke-width="1"/><path d="M929.3 565.0v4.6" stroke="#333" stroke-width="1"/><path d="M947.3 565.0v4.6" stroke="#333" stroke-width="1"/><path d="M965.2 565.0v4.6" stroke="#333" stroke-width="1"/><path d="M983.1 565.0v4.6" stroke="#333" stroke-width="1"/><path d="M783.1 567.2 L953.7 567.2" fill="none" stroke="#8a5fd0" stroke-width="1.25" stroke-linejoin="round"/></svg>
<div class="t" style="left:773.8px;top:570.8px;font-size:9.5px;letter-spacing:-0.16px;color:#333;">22:25</div>
<div class="t" style="left:809.7px;top:570.8px;font-size:9.5px;letter-spacing:-0.16px;color:#333;">22:35</div>
<div class="t" style="left:845.6px;top:570.8px;font-size:9.5px;letter-spacing:-0.16px;color:#333;">22:45</div>
<div class="t" style="left:881.4px;top:570.8px;font-size:9.5px;letter-spacing:-0.16px;color:#333;">22:55</div>
<div class="t" style="left:917.3px;top:570.8px;font-size:9.5px;letter-spacing:-0.16px;color:#333;">23:05</div>
<div class="t" style="left:953.2px;top:570.8px;font-size:9.5px;letter-spacing:-0.16px;color:#333;">23:15</div>
<div class="t" style="left:1002.2px;top:509.0px;font-size:9.5px;letter-spacing:0.20px;color:#333;">1</div>
<div class="t" style="left:1002.2px;top:560.8px;font-size:9.5px;letter-spacing:0.20px;color:#333;">0</div>
<div class="t" style="left:1013.7px;top:540.3px;width:0;height:0;overflow:visible"><div style="position:absolute;white-space:pre;font-size:9.5px;color:#333;letter-spacing:-0.03px;line-height:14px;transform:translate(-50%,-50%) rotate(90deg);transform-origin:50% 50%;left:0;top:0">errors/s</div></div>
<div class="a" style="left:761px;top:586px;width:274px;height:71px;background:#d6d6d6"></div>
<div class="a" style="left:762px;top:587px;width:22px;height:15px;background:#e7e7e7"></div>
<div class="a" style="left:785px;top:587px;width:107px;height:15px;background:#e7e7e7"></div>
<div class="a" style="left:893px;top:587px;width:70px;height:15px;background:#f0f0f0"></div>
<div class="a" style="left:964px;top:587px;width:70px;height:15px;background:#e7e7e7"></div>
<div class="t" style="left:822.5px;top:588.0px;font-size:11px;letter-spacing:-0.23px;color:#7a7a7a;">Switch</div>
<div class="t" style="left:908.5px;top:588.0px;font-size:11px;letter-spacing:-0.16px;color:#7a7a7a;">Errors</div>
<svg style="left:940.0px;top:594px;" width="7" height="4" viewBox="0 0 7 4"><path d="M0 0h7L3.5 4z" fill="#5b6f8f"/></svg>
<div class="t" style="left:980.0px;top:588.0px;font-size:11px;letter-spacing:0.04px;color:#7a7a7a;">Current</div>
<div class="a" style="left:762px;top:603px;width:22px;height:17px;background:#dce9fb"></div>
<div class="a" style="left:785px;top:603px;width:107px;height:17px;background:#dce9fb"></div>
<div class="a" style="left:893px;top:603px;width:70px;height:17px;background:#dce9fb"></div>
<div class="a" style="left:964px;top:603px;width:70px;height:17px;background:#dce9fb"></div>
<div class="a" style="left:770px;top:608.5px;width:7px;height:7px;background:#8a5fd0"></div>
<div class="t" style="left:789.0px;top:604.6px;font-size:11px;letter-spacing:0.00px;"><span style="letter-spacing:-0.37px">brocade</span><span style="letter-spacing:-0.12px">3900</span><span style="letter-spacing:-0.37px">_</span><span style="letter-spacing:-0.12px">6</span></div>
<div class="t" style="left:905.0px;top:604.6px;font-size:11px;letter-spacing:0.00px;"><span style="letter-spacing:-0.12px">0</span><span style="letter-spacing:-0.04px">.</span><span style="letter-spacing:-0.12px">0</span><span style="letter-spacing:-0.04px"> errors/s</span></div>
<div class="t" style="left:976.0px;top:604.6px;font-size:11px;letter-spacing:0.00px;"><span style="letter-spacing:-0.12px">0</span><span style="letter-spacing:-0.04px">.</span><span style="letter-spacing:-0.12px">0</span><span style="letter-spacing:-0.04px"> errors/s</span></div>
<div class="a" style="left:762px;top:621px;width:22px;height:17px;background:#eeeeee"></div>
<div class="a" style="left:785px;top:621px;width:107px;height:17px;background:#eeeeee"></div>
<div class="a" style="left:893px;top:621px;width:70px;height:17px;background:#eeeeee"></div>
<div class="a" style="left:964px;top:621px;width:70px;height:17px;background:#eeeeee"></div>
<div class="a" style="left:770px;top:626.5px;width:7px;height:7px;background:#e8740c"></div>
<div class="t" style="left:789.0px;top:622.6px;font-size:11px;letter-spacing:0.00px;"><span style="letter-spacing:-0.37px">brocade</span><span style="letter-spacing:-0.12px">5100</span><span style="letter-spacing:-0.37px">_</span><span style="letter-spacing:-0.12px">4</span></div>
<div class="t" style="left:905.0px;top:622.6px;font-size:11px;letter-spacing:0.00px;"><span style="letter-spacing:-0.12px">0</span><span style="letter-spacing:-0.04px">.</span><span style="letter-spacing:-0.12px">0</span><span style="letter-spacing:-0.04px"> errors/s</span></div>
<div class="t" style="left:976.0px;top:622.6px;font-size:11px;letter-spacing:0.00px;"><span style="letter-spacing:-0.12px">0</span><span style="letter-spacing:-0.04px">.</span><span style="letter-spacing:-0.12px">0</span><span style="letter-spacing:-0.04px"> errors/s</span></div>
<div class="a" style="left:762px;top:639px;width:22px;height:17px;background:#ffffff"></div>
<div class="a" style="left:785px;top:639px;width:107px;height:17px;background:#ffffff"></div>
<div class="a" style="left:893px;top:639px;width:70px;height:17px;background:#ffffff"></div>
<div class="a" style="left:964px;top:639px;width:70px;height:17px;background:#ffffff"></div>
<div class="a" style="left:770px;top:644.5px;width:7px;height:7px;background:#3c9af2"></div>
<div class="t" style="left:789.0px;top:640.6px;font-size:11px;letter-spacing:0.00px;"><span style="letter-spacing:-0.27px">eva-brcd-</span><span style="letter-spacing:-0.12px">2</span></div>
<div class="t" style="left:905.0px;top:640.6px;font-size:11px;letter-spacing:0.00px;"><span style="letter-spacing:-0.12px">0</span><span style="letter-spacing:-0.04px">.</span><span style="letter-spacing:-0.12px">0</span><span style="letter-spacing:-0.04px"> errors/s</span></div>
<div class="t" style="left:976.0px;top:640.6px;font-size:11px;letter-spacing:0.00px;"><span style="letter-spacing:-0.12px">0</span><span style="letter-spacing:-0.04px">.</span><span style="letter-spacing:-0.12px">0</span><span style="letter-spacing:-0.04px"> errors/s</span></div>
<div class="a" style="left:1044px;top:481px;width:284px;height:184px;border:1px solid #a8a8a8;border-radius:3px 3px 0 0;background:#fff"></div>
<div class="a" style="left:1045px;top:482px;width:282px;height:19px;background:linear-gradient(#ffffff,#eeeeee);border-radius:2px 2px 0 0"></div>
<div class="a" style="left:1045px;top:501px;width:282px;height:1px;background:#b4b4b4"></div>
<div class="t" style="left:1049.5px;top:484.9px;font-size:11px;letter-spacing:0.12px;color:#959595;font-weight:bold;">Highest non-Link Error Rate</div>
<svg style="left:0px;top:0px;" width="1339" height="714" viewBox="0 0 1339 714"><rect x="1071.5" y="515.4" width="188.70000000000005" height="51.80000000000007" fill="url(#pg)"/><path d="M1071.5 515.5H1260.2" stroke="#e6e9f4" stroke-width="1"/><path d="M1071.5 541.3H1260.2" stroke="#e6e9f4" stroke-width="1"/><path d="M1072.0 515.4V567.2" stroke="#e3e6f0" stroke-width="1"/><path d="M1071.5 567.2H1260.2" stroke="#333" stroke-width="1.2"/><path d="M1260.2 515.4V567.7" stroke="#333" stroke-width="1.2"/><path d="M1257.7 515.4h5" stroke="#333" stroke-width="1"/><path d="M1257.7 528.4h5" stroke="#333" stroke-width="1"/><path d="M1257.7 541.3h5" stroke="#333" stroke-width="1"/><path d="M1257.7 554.2h5" stroke="#333" stroke-width="1"/><path d="M1073.7 565.0v4.6" stroke="#333" stroke-width="1"/><path d="M1089.4 565.0v4.6" stroke="#333" stroke-width="1"/><path d="M1105.2 565.0v4.6" stroke="#333" stroke-width="1"/><path d="M1120.9 565.0v4.6" stroke="#333" stroke-width="1"/><path d="M1136.6 565.0v4.6" stroke="#333" stroke-width="1"/><path d="M1152.4 565.0v4.6" stroke="#333" stroke-width="1"/><path d="M1168.1 565.0v4.6" stroke="#333" stroke-width="1"/><path d="M1183.8 565.0v4.6" stroke="#333" stroke-width="1"/><path d="M1199.5 565.0v4.6" stroke="#333" stroke-width="1"/><path d="M1215.3 565.0v4.6" stroke="#333" stroke-width="1"/><path d="M1231.0 565.0v4.6" stroke="#333" stroke-width="1"/><path d="M1246.7 565.0v4.6" stroke="#333" stroke-width="1"/><path d="M1071.5 566.2 L1220.7 566.3" fill="none" stroke="#e8740c" stroke-width="1.25" stroke-linejoin="round"/><path d="M1071.5 567.1 L1220.7 567.0" fill="none" stroke="#8a5fd0" stroke-width="1.25" stroke-linejoin="round"/><path d="M1071.5 540.8 L1078.1 536.1 L1125.4 563.5 L1172.7 534.4 L1220.4 562.8" fill="none" stroke="#3c9af2" stroke-width="1.25" stroke-linejoin="round"/></svg>
<div class="t" style="left:1061.7px;top:570.8px;font-size:9.5px;letter-spacing:-0.16px;color:#333;">22:25</div>
<div class="t" style="left:1093.2px;top:570.8px;font-size:9.5px;letter-spacing:-0.16px;color:#333;">22:35</div>
<div class="t" style="left:1124.6px;top:570.8px;font-size:9.5px;letter-spacing:-0.16px;color:#333;">22:45</div>
<div class="t" style="left:1156.1px;top:570.8px;font-size:9.5px;letter-spacing:-0.16px;color:#333;">22:55</div>
<div class="t" style="left:1187.5px;top:570.8px;font-size:9.5px;letter-spacing:-0.16px;color:#333;">23:05</div>
<div class="t" style="left:1219.0px;top:570.8px;font-size:9.5px;letter-spacing:-0.16px;color:#333;">23:15</div>
<div class="t" style="left:1264.0px;top:509.0px;font-size:9.5px;letter-spacing:-0.18px;color:#333;">8.0E7.0</div>
<div class="t" style="left:1264.0px;top:534.9px;font-size:9.5px;letter-spacing:-0.18px;color:#333;">4.0E7.0</div>
<div class="t" style="left:1264.0px;top:560.8px;font-size:9.5px;letter-spacing:0.09px;color:#333;">0.0</div>
<div class="t" style="left:1301.5px;top:541.3px;width:0;height:0;overflow:visible"><div style="position:absolute;white-space:pre;font-size:9.5px;color:#333;letter-spacing:-0.06px;line-height:14px;transform:translate(-50%,-50%) rotate(90deg);transform-origin:50% 50%;left:0;top:0">errors/frame</div></div>
<div class="a" style="left:1049px;top:586px;width:274px;height:71px;background:#d6d6d6"></div>
<div class="a" style="left:1050px;top:587px;width:22px;height:15px;background:#e7e7e7"></div>
<div class="a" style="left:1073px;top:587px;width:107px;height:15px;background:#e7e7e7"></div>
<div class="a" style="left:1181px;top:587px;width:70px;height:15px;background:#f0f0f0"></div>
<div class="a" style="left:1252px;top:587px;width:70px;height:15px;background:#e7e7e7"></div>
<div class="t" style="left:1110.5px;top:588.0px;font-size:11px;letter-spacing:-0.23px;color:#7a7a7a;">Switch</div>
<div class="t" style="left:1196.5px;top:588.0px;font-size:11px;letter-spacing:-0.16px;color:#7a7a7a;">Errors</div>
<svg style="left:1228.0px;top:594px;" width="7" height="4" viewBox="0 0 7 4"><path d="M0 0h7L3.5 4z" fill="#5b6f8f"/></svg>
<div class="t" style="left:1268.0px;top:588.0px;font-size:11px;letter-spacing:0.04px;color:#7a7a7a;">Current</div>
<div class="a" style="left:1050px;top:603px;width:22px;height:17px;background:#ffffff"></div>
<div class="a" style="left:1073px;top:603px;width:107px;height:17px;background:#ffffff"></div>
<div class="a" style="left:1181px;top:603px;width:70px;height:17px;background:#ffffff"></div>
<div class="a" style="left:1252px;top:603px;width:70px;height:17px;background:#ffffff"></div>
<div class="a" style="left:1058px;top:608.5px;width:7px;height:7px;background:#3c9af2"></div>
<div class="t" style="left:1077.0px;top:604.6px;font-size:11px;letter-spacing:0.00px;"><span style="letter-spacing:-0.37px">brocade</span><span style="letter-spacing:-0.12px">5100</span><span style="letter-spacing:-0.37px">_</span><span style="letter-spacing:-0.12px">1</span></div>
<div class="t" style="left:1186.0px;top:604.6px;font-size:11px;letter-spacing:0.00px;"><span style="letter-spacing:-0.12px">11</span><span style="letter-spacing:-0.27px">,</span><span style="letter-spacing:-0.12px">239</span><span style="letter-spacing:-0.27px">,</span><span style="letter-spacing:-0.12px">946</span><span style="letter-spacing:-0.27px">...</span></div>
<div class="t" style="left:1260.0px;top:604.6px;font-size:11px;letter-spacing:0.00px;"><span style="letter-spacing:-0.12px">6</span><span style="letter-spacing:-0.23px">,</span><span style="letter-spacing:-0.12px">370</span><span style="letter-spacing:-0.23px">,</span><span style="letter-spacing:-0.12px">562</span><span style="letter-spacing:-0.23px">....</span></div>
<div class="a" style="left:1050px;top:621px;width:22px;height:17px;background:#eeeeee"></div>
<div class="a" style="left:1073px;top:621px;width:107px;height:17px;background:#eeeeee"></div>
<div class="a" style="left:1181px;top:621px;width:70px;height:17px;background:#eeeeee"></div>
<div class="a" style="left:1252px;top:621px;width:70px;height:17px;background:#eeeeee"></div>
<div class="a" style="left:1058px;top:626.5px;width:7px;height:7px;background:#e8740c"></div>
<div class="t" style="left:1077.0px;top:622.6px;font-size:11px;letter-spacing:0.00px;"><span style="letter-spacing:-0.37px">brocade</span><span style="letter-spacing:-0.12px">5100</span><span style="letter-spacing:-0.37px">_</span><span style="letter-spacing:-0.12px">5</span></div>
<div class="t" style="left:1189.0px;top:622.6px;font-size:11px;letter-spacing:0.00px;"><span style="letter-spacing:-0.12px">163</span><span style="letter-spacing:-0.23px">,</span><span style="letter-spacing:-0.12px">811</span><span style="letter-spacing:-0.23px">.</span><span style="letter-spacing:-0.12px">1</span><span style="letter-spacing:-0.23px"> ...</span></div>
<div class="t" style="left:1260.0px;top:622.6px;font-size:11px;letter-spacing:0.00px;"><span style="letter-spacing:-0.12px">223</span><span style="letter-spacing:-0.23px">,</span><span style="letter-spacing:-0.12px">191</span><span style="letter-spacing:-0.23px">.</span><span style="letter-spacing:-0.12px">7</span><span style="letter-spacing:-0.23px"> ...</span></div>
<div class="a" style="left:1050px;top:639px;width:22px;height:17px;background:#dce9fb"></div>
<div class="a" style="left:1073px;top:639px;width:107px;height:17px;background:#dce9fb"></div>
<div class="a" style="left:1181px;top:639px;width:70px;height:17px;background:#dce9fb"></div>
<div class="a" style="left:1252px;top:639px;width:70px;height:17px;background:#dce9fb"></div>
<div class="a" style="left:1058px;top:644.5px;width:7px;height:7px;background:#8a5fd0"></div>
<div class="t" style="left:1077.0px;top:640.6px;font-size:11px;letter-spacing:0.00px;"><span style="letter-spacing:-0.37px">brocade</span><span style="letter-spacing:-0.12px">3900</span><span style="letter-spacing:-0.37px">_</span><span style="letter-spacing:-0.12px">6</span></div>
<div class="t" style="left:1187.0px;top:640.6px;font-size:11px;letter-spacing:0.00px;"><span style="letter-spacing:-0.12px">35</span><span style="letter-spacing:-0.09px">.</span><span style="letter-spacing:-0.12px">8</span><span style="letter-spacing:-0.09px"> errors...</span></div>
<div class="t" style="left:1258.0px;top:640.6px;font-size:11px;letter-spacing:0.00px;"><span style="letter-spacing:-0.12px">72</span><span style="letter-spacing:-0.09px">.</span><span style="letter-spacing:-0.12px">0</span><span style="letter-spacing:-0.09px"> errors...</span></div>
<!-- alarm summary -->
<div class="a" style="left:468px;top:669px;width:864px;height:50px;border:1px solid #a8a8a8;border-radius:3px 3px 0 0;background:#fff"></div>
<div class="a" style="left:469px;top:670px;width:862px;height:19px;background:linear-gradient(#ffffff,#eeeeee);border-radius:2px 2px 0 0"></div>
<div class="a" style="left:469px;top:689px;width:862px;height:1px;background:#b4b4b4"></div>
<div class="t" style="left:473.5px;top:672.8px;font-size:11px;letter-spacing:0.12px;color:#959595;font-weight:bold;">Alarm Summary</div>
<div class="a" style="left:473px;top:694px;width:839px;height:18px;background:#d6d6d6"></div>
<div class="a" style="left:474px;top:695px;width:88px;height:16px;background:#e7e7e7"></div>
<div class="a" style="left:563px;top:695px;width:118px;height:16px;background:#e7e7e7"></div>
<div class="a" style="left:682px;top:695px;width:118px;height:16px;background:#e7e7e7"></div>
<div class="a" style="left:801px;top:695px;width:318px;height:16px;background:#e7e7e7"></div>
<div class="a" style="left:1120px;top:695px;width:191px;height:16px;background:#e7e7e7"></div>
<div class="a" style="left:1312px;top:711px;width:11px;height:1px;background:#e2e2e2"></div>
<div class="t" style="left:509.9px;top:696.3px;font-size:11px;letter-spacing:-0.66px;color:#3a4660;">Sev</div>
<div class="t" style="left:610.2px;top:696.3px;font-size:11px;letter-spacing:-0.01px;color:#3a4660;">Time</div>
<div class="t" style="left:729.4px;top:696.3px;font-size:11px;letter-spacing:0.04px;color:#3a4660;">Type</div>
<div class="t" style="left:925.0px;top:696.3px;font-size:11px;letter-spacing:-0.23px;color:#3a4660;">Instance Name</div>
<div class="t" style="left:1195.0px;top:696.3px;font-size:11px;letter-spacing:-0.38px;color:#3a4660;">Message</div>
<svg style="left:1313px;top:697px;" width="9" height="10" viewBox="0 0 9 10"><path d="M0 1.5h2M3.5 1.5h4.5M0 4.5h2M3.5 4.5h4.5M0 7.5h2" stroke="#6a6a6a" stroke-width="1"/><path d="M4 7h5L6.5 9.8z" fill="#555"/></svg>
<div class="a" style="left:0px;top:712px;width:1339px;height:2px;background:#d9d9d9"></div>
<div class="a" style="left:1337px;top:0px;width:2px;height:714px;background:#d9d9d9"></div>
</body></html>
